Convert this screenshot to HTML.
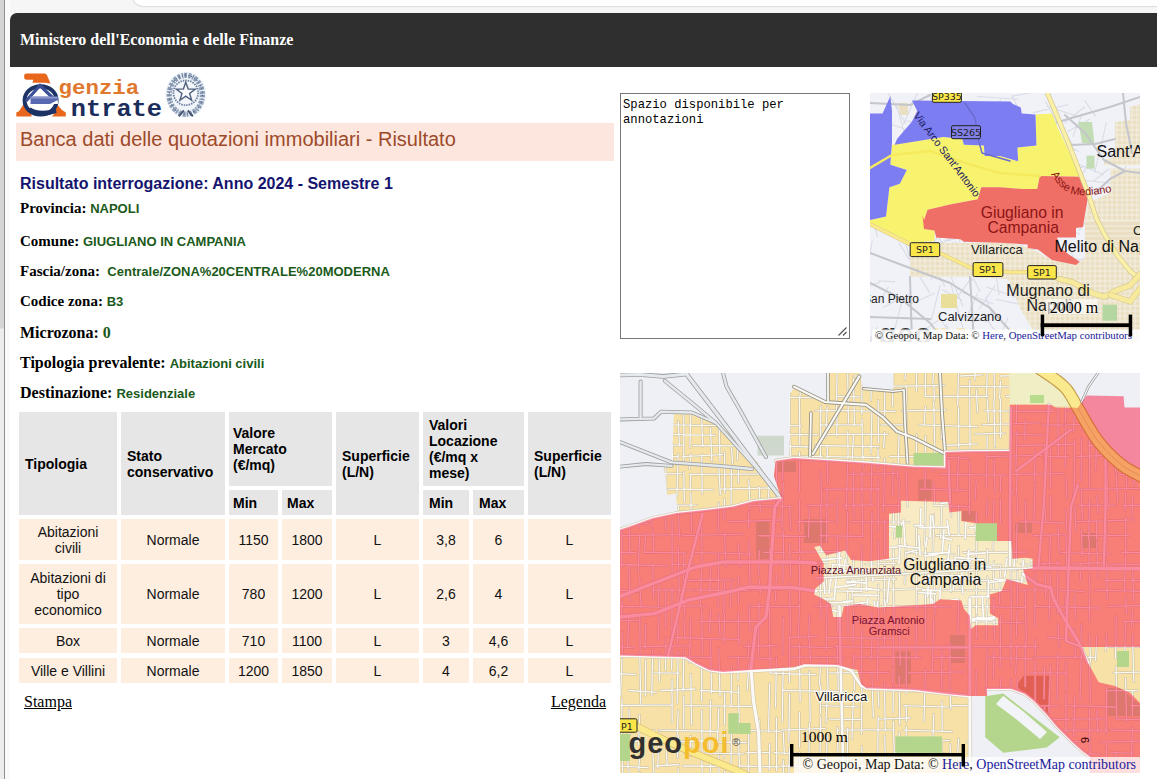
<!DOCTYPE html>
<html lang="it">
<head>
<meta charset="utf-8">
<title>Banca dati delle quotazioni immobiliari - Risultato</title>
<style>
html,body{margin:0;padding:0;}
body{width:1157px;height:779px;overflow:hidden;position:relative;background:#fff;font-family:"Liberation Serif",serif;}
.abs{position:absolute;}
#chrome-top{left:0;top:0;width:1157px;height:13px;background:#f6f6f6;}
#chrome-pill{left:133px;top:-14px;width:1100px;height:20px;background:#fff;border-radius:10px;box-shadow:0 0 1px 1px #dcdcdc;}
#left-strip{left:0;top:0;width:4px;height:779px;background:linear-gradient(#d4d4d4 0,#d4d4d4 328px,#ededed 329px,#ededed 100%);}
#left-line{left:4px;top:0;width:1px;height:779px;background:#8f8f8f;}
#left-white{left:5px;top:0;width:5px;height:779px;background:#fafafa;}
#hdr{left:10px;top:13px;width:1147px;height:54px;background:#2f2f2f;border-top-left-radius:7px;}
#hdr span{position:absolute;left:10px;top:18px;color:#fff;font:bold 16px/18px "Liberation Serif",serif;white-space:nowrap;}
#titleband{left:16px;top:123px;width:598px;height:38px;background:#fde6de;}
#titleband span{position:absolute;left:4px;top:4px;font:20px/24px "Liberation Sans",sans-serif;color:#9c4a2a;white-space:nowrap;}
#res{left:20px;top:175px;font:bold 16px/18px "Liberation Sans",sans-serif;color:#14146e;white-space:nowrap;}
.row{left:20px;font:bold 16px/18px "Liberation Serif",serif;color:#000;white-space:nowrap;}
.row.s{font-size:15px;}
.row b{font:bold 13px/18px "Liberation Sans",sans-serif;color:#1a5a1a;}
.row i{font-style:normal;color:#1a5a1a;}

#tbl{left:15px;top:408px;border-collapse:separate;border-spacing:4px;table-layout:fixed;font-family:"Liberation Sans",sans-serif;}
#tbl th{background:#e6e6e6;color:#000;font:bold 14px/16px "Liberation Sans",sans-serif;text-align:left;vertical-align:middle;padding:0 0 0 6px;}
#tbl td{background:#fdeee0;color:#111;font:14px/16px "Liberation Sans",sans-serif;text-align:center;vertical-align:middle;padding:0;}
#tbl tr.last td{border-top:1px solid #fff;}
.lnk{font:16px/18px "Liberation Serif",serif;color:#000;text-decoration:underline;}

#ta{left:620px;top:93px;width:230px;height:246px;box-sizing:border-box;border:1px solid #767676;background:#fff;font:12.2px/15px "Liberation Mono",monospace;color:#000;padding:4px 2px;white-space:pre;overflow:hidden;}
#bigmap{left:620px;top:373px;width:520px;height:400px;overflow:hidden;}
#smallmap{left:870px;top:93px;width:270px;height:249px;overflow:hidden;}
</style>
</head>
<body>
<div class="abs" id="chrome-top"></div>
<div class="abs" id="chrome-pill"></div>
<div class="abs" id="left-strip"></div>
<div class="abs" id="left-line"></div>
<div class="abs" id="left-white"></div>
<div class="abs" id="hdr"><span>Ministero dell'Economia e delle Finanze</span></div>

<div class="abs" id="titleband"><span>Banca dati delle quotazioni immobiliari - Risultato</span></div>
<div class="abs" id="res">Risultato interrogazione: Anno 2024 - Semestre 1</div>
<div class="abs row s" style="top:199px">Provincia: <b>NAPOLI</b></div>
<div class="abs row s" style="top:232px">Comune: <b>GIUGLIANO IN CAMPANIA</b></div>
<div class="abs row s" style="top:262px">Fascia/zona: <b>&nbsp;Centrale/ZONA%20CENTRALE%20MODERNA</b></div>
<div class="abs row s" style="top:292px">Codice zona: <b>B3</b></div>
<div class="abs row" style="top:324px">Microzona: <i>0</i></div>
<div class="abs row" style="top:354px">Tipologia prevalente: <b>Abitazioni civili</b></div>
<div class="abs row" style="top:384px">Destinazione: <b>Residenziale</b></div>

<table class="abs" id="tbl" cellspacing="0" cellpadding="0">
<colgroup><col style="width:98px"><col style="width:104px"><col style="width:49px"><col style="width:50px"><col style="width:83px"><col style="width:46px"><col style="width:51px"><col style="width:83px"></colgroup>
<tr style="height:74px"><th rowspan="2">Tipologia</th><th rowspan="2">Stato<br>conservativo</th><th colspan="2" style="padding-left:4px">Valore<br>Mercato<br>(&euro;/mq)</th><th rowspan="2">Superficie<br>(L/N)</th><th colspan="2">Valori<br>Locazione<br>(&euro;/mq x<br>mese)</th><th rowspan="2">Superficie<br>(L/N)</th></tr>
<tr style="height:25px"><th style="padding-left:4px">Min</th><th style="padding-left:5px">Max</th><th>Min</th><th>Max</th></tr>
<tr style="height:41px"><td>Abitazioni<br>civili</td><td>Normale</td><td>1150</td><td>1800</td><td>L</td><td>3,8</td><td>6</td><td>L</td></tr>
<tr style="height:60px"><td>Abitazioni di<br>tipo<br>economico</td><td>Normale</td><td>780</td><td>1200</td><td>L</td><td>2,6</td><td>4</td><td>L</td></tr>
<tr style="height:25px"><td>Box</td><td>Normale</td><td>710</td><td>1100</td><td>L</td><td>3</td><td>4,6</td><td>L</td></tr>
<tr class="last" style="height:26px"><td>Ville e Villini</td><td>Normale</td><td>1200</td><td>1850</td><td>L</td><td>4</td><td>6,2</td><td>L</td></tr>
</table>
<div class="abs lnk" style="left:24px;top:693px">Stampa</div>
<div class="abs lnk" style="right:551px;top:693px">Legenda</div>
<div class="abs" style="left:14px;top:68px"><svg width="200" height="54" viewBox="14 68 200 54" style="display:block">
<path d="M24.2 75.5 Q24.2 73.4 27 73.4 L44.5 73.4 Q46.3 73.4 47 75.2 L50.5 83.5 L45 82.8 L32.5 82.8 L33.2 79.8 L27 79.8 Q24.2 79.8 24.2 77.6 Z" fill="#e8671c"/>
<path d="M16.3 116.4 L16.3 112.6 L19 111.2 L24 103.5 L28.5 108 L31.5 112.5 L31.5 116.4 Z" fill="#e8671c"/>
<path d="M53.5 107.5 L57.5 105 L62 110 L65.8 112.6 L65.8 116.4 L52 116.4 L55.5 112 Z" fill="#e8671c"/>
<ellipse cx="40.6" cy="100.4" rx="16" ry="14.2" fill="#fff" stroke="#1d3365" stroke-width="4"/>
<path d="M26 101 L40 85.5 L55 100" fill="none" stroke="#3a4f96" stroke-width="3.2"/>
<rect x="30.5" y="96.6" width="27.3" height="7.4" fill="#5868b2"/>
<rect x="30.5" y="96.6" width="27.3" height="2" fill="#8a96c8"/>
<path d="M30.5 107.5 Q40 113.5 56 108.5 L56.5 113 Q40 119 27.5 111.5 Z" fill="#1d3365"/>
<path d="M57.8 100 L57.8 104 L50 104 Z" fill="#fff"/>
<text x="58.6" y="94.2" font-family="Liberation Mono, monospace" font-weight="bold" font-size="20" textLength="80.6" lengthAdjust="spacingAndGlyphs" fill="#e0782e">genzia</text>
<text x="70.8" y="116" font-family="Liberation Mono, monospace" font-weight="bold" font-size="24.5" textLength="91.2" lengthAdjust="spacingAndGlyphs" fill="#1b2d5a">ntrate</text>
<g style="filter:blur(.35px)">
<ellipse cx="185.8" cy="94.8" rx="20.5" ry="23.2" fill="#f0f5fa"/>
<ellipse cx="185.8" cy="94.8" rx="16.6" ry="19.4" fill="none" stroke="#8b9bb5" stroke-width="5.2" stroke-dasharray="2.6 1.3 1.6 .9 3 1.5"/>
<ellipse cx="185.8" cy="94.8" rx="16.6" ry="19.4" fill="none" stroke="#5a6a88" stroke-width="1.1" stroke-dasharray="1.4 2.3 .8 1.9"/>
<circle cx="185.8" cy="92.8" r="12.4" fill="#f2f6fa" stroke="#6e80a0" stroke-width="1.8" stroke-dasharray="1.5 1"/>
<polygon points="185.8,82.2 188.2,89.0 195.3,89.1 189.6,93.4 191.7,100.3 185.8,96.2 179.9,100.3 182.0,93.4 176.3,89.1 183.4,89.0" fill="#fafcfe" stroke="#50617f" stroke-width="1.4" stroke-linejoin="miter"/>
<path d="M178.8 116.3 L183.8 110.3 M192.8 116.3 L187.8 110.3" stroke="#48546e" stroke-width="1.8"/>
</g>
</svg></div>
<div class="abs" id="ta">Spazio disponibile per
annotazioni</div>
<svg class="abs" style="left:836px;top:325px" width="12" height="12" viewBox="0 0 12 12"><path d="M2.5 10.5 L10.5 2.5 M7 10.5 L10.5 7" stroke="#555" stroke-width="1.2" fill="none"/></svg>
<div class="abs" id="bigmap">
<svg width="520" height="400" viewBox="0 0 520 400" style="display:block">
<rect width="520" height="400" fill="#f7e1a6"/>
<rect x="298.3" y="106.3" width="13.3" height="21.3" fill="#bcd490"/>
<rect x="157.5" y="88.5" width="18.5" height="10.5" fill="#bcd490"/>
<rect x="136.2" y="148.8" width="13.3" height="37.2" fill="#bcd490"/>
<rect x="184" y="146.2" width="24.0" height="23.8" fill="#bcd490"/>
<rect x="275.4" y="278.3" width="15.6" height="32.7" fill="#bcd490"/>
<rect x="341.4" y="138" width="14.3" height="10.0" fill="#bcd490"/>
<rect x="461" y="160" width="15.0" height="15.0" fill="#bcd490"/>
<rect x="395" y="150" width="17.0" height="10.0" fill="#bcd490"/>
<rect x="330" y="262" width="15.0" height="28.0" fill="#bcd490"/>
<polygon points="396,313 403.7,302.7 429.4,302.7 429.4,343.7 414,328.3" fill="#c8a05a"/>
<polygon points="488,315 500,315 520,332 520,343 488,343" fill="#bcd490"/>
<polygon points="280.9,127.7 328.4,128.9 329.6,139.6 341.4,137.9 341.4,147.9 355.7,150.2 377.0,150.2 377.0,168.0 391.3,168.0 392.5,185.8 405.5,184.7 412.6,185.8 412.6,195.3 403.1,196.5 407.9,212.0 386.5,206.0 381.8,217.9 369.9,221.5 369.9,240.4 378.2,245.2 378.2,252.3 355.7,252.3 350.9,255.9 349.7,242.8 343.8,235.7 341.4,227.4 320.0,226.2 312.9,230.9 279.7,233.3 258.3,234.5 239.3,230.9 223.9,233.3 221.5,244.0 213.2,244.0 210.9,230.9 203.7,226.2 194.2,221.5 195.4,215.5 203.7,208.4 203.7,190.6 194.2,174.0 200.2,172.8 206.1,182.3 215.6,179.9 225.1,177.5 231.0,187.0 248.8,188.2 269.0,185.8 269.0,140.7 280.9,139.6" fill="#f8ebc4"/>
<path d="M2.0 -10.3L0.7 9.9M2.0 17.4L2.0 46.4M2.0 46.9L0.8 78.7M2.0 84.6L1.2 132.5M2.0 141.3L1.7 194.2M2.0 227.8L1.4 247.7M2.0 259.2L2.4 280.6M2.0 285.8L0.7 322.2M2.0 325.1L1.4 367.0M2.0 375.2L2.9 407.8M9.0 70.4L7.9 101.6M9.0 108.4L9.8 124.0M9.0 132.1L9.6 181.9M9.0 190.3L10.0 228.0M9.0 241.3L7.6 274.7M9.0 336.6L9.5 362.2M9.0 362.6L7.8 395.5M9.0 396.3L8.2 441.8M19.7 -17.6L20.8 14.8M19.7 26.3L19.4 75.7M19.7 133.1L18.9 154.3M19.7 161.1L18.2 199.3M19.7 205.1L21.1 234.3M19.7 244.0L20.2 279.1M19.7 279.8L20.8 330.7M19.7 341.9L18.5 372.0M19.7 380.9L18.8 397.4M19.7 399.7L18.2 427.6M25.8 14.6L25.3 34.6M25.8 72.7L24.6 105.8M25.8 107.2L26.8 135.3M25.8 159.9L24.4 179.9M25.8 251.1L24.8 275.8M25.8 286.6L25.3 322.5M32.7 -4.5L31.2 24.1M32.7 28.0L34.0 52.6M32.7 124.7L31.8 153.6M32.7 156.4L33.9 178.8M32.7 190.5L33.6 224.2M32.7 277.4L31.7 322.2M32.7 374.5L34.0 404.7M39.2 49.0L39.3 90.0M39.2 209.8L38.4 234.2M39.2 242.4L38.1 267.0M39.2 279.7L39.4 308.3M39.2 359.2L37.7 395.0M45.8 -19.9L45.7 26.9M45.8 37.0L45.8 73.9M45.8 81.6L46.0 127.8M45.8 131.3L45.8 156.6M45.8 215.8L45.8 255.0M45.8 264.7L45.7 297.2M45.8 366.2L47.1 390.9M52.1 -16.4L51.3 15.8M52.1 70.8L52.6 91.1M52.1 146.4L52.1 199.5M52.1 213.3L51.9 261.5M52.1 268.7L51.6 296.6M52.1 306.7L51.9 321.5M52.1 321.7L52.1 349.3M58.2 -12.0L57.5 3.6M58.2 48.2L59.5 72.8M58.2 80.8L56.9 123.5M58.2 133.1L59.5 164.6M58.2 173.4L59.3 220.3M58.2 221.2L57.7 270.6M58.2 278.4L57.1 330.4M58.2 337.7L57.2 361.5M58.2 362.2L57.6 384.5M58.2 395.1L57.3 421.0M63.8 -12.5L64.0 2.1M63.8 39.7L63.8 87.3M63.8 99.0L64.4 129.1M63.8 180.8L63.4 220.9M63.8 221.7L64.6 241.0M63.8 244.6L64.9 265.3M63.8 277.4L63.1 318.9M63.8 323.0L63.7 355.9M70.8 9.0L69.3 35.7M70.8 41.0L69.9 74.5M70.8 81.5L69.6 95.7M70.8 101.3L70.2 117.0M70.8 120.3L71.6 158.3M70.8 245.8L69.4 289.5M70.8 301.2L71.5 351.7M70.8 363.1L70.8 382.8M81.7 0.5L80.3 42.9M81.7 44.8L82.7 73.6M81.7 81.4L82.2 121.1M81.7 152.6L82.1 187.2M81.7 188.1L80.4 232.3M81.7 236.1L82.4 280.0M81.7 293.6L81.6 327.9M81.7 337.4L82.1 382.9M81.7 384.0L82.4 404.0M90.6 -19.6L91.1 -3.1M90.6 6.6L90.6 48.3M90.6 54.8L91.8 87.9M90.6 191.4L89.7 223.8M90.6 237.1L89.5 259.7M90.6 267.0L91.5 320.1M90.6 327.2L89.8 377.6M90.6 390.1L89.1 424.1M98.8 -10.9L98.2 8.8M98.8 20.6L99.8 34.7M98.8 36.3L100.0 88.3M98.8 92.4L100.3 121.6M98.8 129.9L98.1 158.7M98.8 181.5L98.1 233.9M98.8 241.0L100.1 262.8M98.8 275.2L100.0 322.5M98.8 335.7L97.4 372.2M98.8 382.4L99.2 414.9M104.6 7.8L104.1 27.0M104.6 79.1L104.7 120.0M104.6 125.6L103.7 146.4M104.6 159.1L105.8 193.5M104.6 207.4L103.6 239.9M104.6 241.1L103.8 269.2M104.6 320.6L104.6 351.6M104.6 356.8L103.9 384.7M104.6 398.2L105.0 417.4M111.4 -11.9L111.2 12.3M111.4 74.8L112.6 90.1M111.4 96.7L111.0 134.8M111.4 209.2L110.3 233.4M111.4 292.8L111.2 333.3M111.4 359.9L110.8 411.7M118.4 -0.9L117.1 41.7M118.4 49.1L117.5 87.0M118.4 95.4L118.3 109.8M118.4 170.3L119.8 193.9M118.4 203.8L118.4 230.4M118.4 239.9L118.9 271.1M118.4 284.0L117.9 307.3M118.4 313.2L119.3 355.2M118.4 365.6L119.8 400.3M128.8 -13.1L128.2 10.0M128.8 23.3L128.0 57.7M128.8 106.8L130.2 137.0M128.8 138.9L128.5 155.1M128.8 167.6L130.3 217.9M128.8 230.9L130.1 258.4M128.8 268.9L128.4 284.2M128.8 289.4L127.3 317.0M128.8 351.1L128.4 404.6M139.2 -7.0L138.8 9.0M139.2 21.9L140.4 43.8M139.2 85.8L137.9 101.4M139.2 114.3L140.4 138.9M139.2 177.4L138.7 202.2M139.2 206.0L140.5 220.2M139.2 229.1L138.4 281.7M139.2 347.0L139.2 371.3M149.7 3.2L149.1 42.1M149.7 47.1L148.8 93.2M149.7 103.8L148.3 127.9M149.7 175.4L148.4 229.9M149.7 231.2L149.5 265.6M149.7 268.9L150.2 300.0M149.7 310.5L148.5 359.2M149.7 371.0L149.3 397.0M156.4 -12.6L157.5 11.5M156.4 19.6L157.8 47.0M156.4 86.7L156.3 141.3M156.4 201.8L155.4 227.9M156.4 284.6L155.6 334.1M156.4 345.0L156.6 397.8M163.2 -8.9L162.4 10.9M163.2 19.2L161.7 60.0M163.2 64.5L162.6 106.4M163.2 109.2L161.9 155.8M163.2 157.2L163.6 187.4M163.2 188.7L162.9 209.4M163.2 244.4L162.9 281.6M163.2 293.7L162.3 348.6M163.2 358.8L164.4 381.1M163.2 387.0L164.3 434.7M169.6 -19.6L170.9 17.1M169.6 18.3L169.7 57.8M169.6 59.9L170.9 85.5M169.6 134.6L171.0 156.7M169.6 170.4L170.9 204.2M169.6 209.6L170.6 260.7M169.6 262.9L169.4 309.1M169.6 321.0L168.8 369.0M169.6 374.6L168.5 409.8M179.5 6.9L180.3 22.6M179.5 23.1L179.8 71.5M179.5 79.2L179.3 118.9M179.5 127.1L179.3 158.5M179.5 164.7L179.5 179.6M179.5 182.9L179.4 228.2M179.5 230.7L178.4 264.1M179.5 270.2L179.5 287.9M179.5 288.5L180.2 328.6M179.5 339.5L179.5 374.4M179.5 379.7L180.6 432.7M189.4 136.1L188.4 164.4M189.4 241.8L188.8 266.6M189.4 267.1L190.7 288.5M189.4 298.1L190.2 348.8M189.4 350.4L189.0 386.1M189.4 398.4L190.5 435.1M200.8 32.8L200.4 87.4M200.8 98.1L201.6 130.2M200.8 130.9L201.3 178.5M200.8 192.3L200.3 230.3M200.8 230.3L201.2 245.7M200.8 288.6L199.4 311.9M200.8 312.0L200.4 340.5M200.8 343.7L200.0 381.6M200.8 390.3L202.2 423.8M207.2 34.0L205.8 64.5M207.2 73.5L207.7 110.6M207.2 116.8L206.5 169.2M207.2 181.8L207.0 197.6M207.2 201.0L205.8 217.4M207.2 225.1L206.3 277.7M207.2 286.2L208.2 321.0M207.2 323.4L205.9 350.1M207.2 362.5L205.8 408.6M217.2 -6.0L216.4 38.4M217.2 39.8L216.7 63.4M217.2 126.3L217.0 151.2M217.2 162.3L217.6 197.7M217.2 234.3L217.9 259.0M217.2 272.2L218.3 316.8M217.2 354.1L218.6 396.5M227.7 0.9L228.4 50.1M227.7 58.1L228.1 84.7M227.7 85.8L226.3 137.1M227.7 138.6L226.7 190.7M227.7 191.1L228.1 206.8M227.7 216.6L228.0 260.8M227.7 355.4L226.9 408.1M233.5 5.4L234.4 52.7M233.5 61.6L232.2 87.3M233.5 98.0L233.2 120.4M233.5 120.6L234.1 145.2M233.5 184.5L232.0 233.4M233.5 239.2L233.0 271.1M233.5 281.0L234.5 317.0M233.5 318.3L232.0 365.9M241.9 -5.3L241.9 41.4M241.9 46.3L243.2 94.4M241.9 98.4L241.9 121.2M241.9 122.7L242.8 162.8M241.9 172.6L241.5 218.8M241.9 255.8L241.0 306.2M241.9 309.9L241.5 360.9M241.9 373.3L242.0 396.8M251.9 -0.6L250.9 27.7M251.9 39.5L250.9 80.6M251.9 86.8L250.8 132.5M251.9 138.9L251.0 189.2M251.9 238.5L251.4 258.8M251.9 266.2L251.0 286.8M251.9 300.4L253.3 344.3M251.9 386.6L251.0 430.7M258.1 -13.8L257.8 16.1M258.1 27.2L258.5 69.6M258.1 76.1L257.8 95.9M258.1 106.3L258.3 157.5M258.1 168.0L258.7 199.3M258.1 211.6L259.1 257.3M258.1 266.8L257.5 307.2M258.1 315.9L258.9 334.0M258.1 343.9L257.8 383.8M258.1 390.1L258.6 429.6M264.7 -0.4L264.6 45.5M264.7 59.2L263.6 74.7M264.7 85.7L263.5 138.3M264.7 146.3L264.7 182.5M264.7 191.4L264.4 239.4M264.7 252.7L264.3 275.3M264.7 310.0L264.4 326.3M264.7 326.5L265.3 357.6M264.7 362.6L265.4 387.5M273.3 -13.4L272.5 33.4M273.3 90.0L272.5 123.2M273.3 136.7L274.3 165.2M273.3 176.6L273.5 209.8M273.3 211.5L274.4 259.7M273.3 263.5L273.1 292.9M273.3 295.5L272.7 309.6M273.3 313.0L273.1 339.4M273.3 348.3L274.6 389.4M279.2 57.9L277.7 106.0M279.2 106.2L278.4 159.2M279.2 160.6L280.0 180.5M279.2 246.1L280.3 292.1M279.2 303.1L279.7 351.5M279.2 359.0L280.3 403.4M286.2 -13.0L284.9 6.7M286.2 13.3L286.2 33.2M286.2 40.8L287.3 90.1M286.2 96.7L287.3 133.7M286.2 171.2L284.8 211.3M286.2 266.5L286.2 320.7M286.2 333.3L286.6 348.7M286.2 353.4L286.2 402.8M296.4 -13.7L296.5 18.2M296.4 61.4L296.4 96.1M296.4 155.2L296.6 182.2M296.4 191.1L297.0 237.2M296.4 249.6L295.8 286.0M296.4 370.1L296.8 409.2M305.4 0.4L305.3 23.1M305.4 33.8L304.1 52.0M305.4 62.8L305.1 114.3M305.4 125.8L304.7 172.1M305.4 176.3L305.2 207.6M305.4 216.6L305.7 268.9M305.4 296.3L304.0 348.0M313.8 -7.6L312.9 10.6M313.8 12.7L314.4 27.3M313.8 29.0L314.9 82.6M313.8 84.4L313.0 99.2M313.8 109.4L314.6 131.1M313.8 141.1L312.6 190.2M313.8 199.0L315.1 242.1M313.8 245.6L312.3 299.2M313.8 341.2L312.8 367.9M313.8 380.0L313.4 413.9M321.9 25.3L321.7 65.8M321.9 128.4L320.6 165.6M321.9 277.2L321.7 315.9M321.9 328.3L322.2 357.8M321.9 370.3L320.4 417.4M330.0 106.0L331.0 143.4M330.0 201.6L330.9 219.1M330.0 270.0L329.9 308.8M330.0 311.7L330.8 336.2M330.0 371.0L331.2 394.6M338.6 -5.7L337.7 32.5M338.6 35.0L338.8 77.7M338.6 83.4L337.2 118.6M338.6 132.5L339.0 161.9M338.6 172.9L338.1 193.3M338.6 200.6L340.1 215.4M338.6 227.5L337.9 261.5M338.6 365.7L337.6 381.3M338.6 382.4L339.7 398.5M349.8 7.3L349.5 23.9M349.8 25.6L350.0 78.9M349.8 87.9L349.5 141.1M349.8 181.8L349.1 204.9M349.8 339.7L351.1 359.7M349.8 369.2L350.6 395.4M349.8 396.9L348.7 424.2M356.3 -12.8L354.8 7.0M356.3 17.1L357.6 39.1M356.3 106.9L355.1 126.6M356.3 139.6L356.2 188.2M356.3 192.9L356.7 240.7M356.3 242.7L356.9 265.7M356.3 297.2L355.6 328.0M356.3 339.8L356.3 367.5M356.3 372.0L357.7 423.0M367.2 0.0L366.5 22.7M367.2 26.3L368.6 48.6M367.2 62.6L366.5 114.5M367.2 127.0L366.5 143.4M367.2 176.5L368.2 196.3M367.2 203.6L368.4 225.3M367.2 228.3L366.2 265.7M367.2 276.5L365.9 319.7M367.2 320.9L366.5 359.9M367.2 362.8L368.1 401.9M373.9 -18.0L374.5 26.0M373.9 26.8L374.9 74.0M373.9 86.1L375.1 120.3M373.9 127.0L372.9 176.8M373.9 188.4L373.5 217.5M373.9 225.8L373.7 240.0M373.9 247.2L374.8 266.1M373.9 278.3L373.5 305.4M373.9 345.8L374.0 380.1M380.5 7.8L379.6 25.7M380.5 26.0L380.5 64.5M380.5 102.6L380.5 118.5M380.5 125.5L380.2 151.0M380.5 193.2L379.5 230.7M380.5 242.3L380.2 294.7M380.5 306.5L381.8 342.0M380.5 352.9L380.0 380.8M390.9 5.4L392.2 21.6M390.9 34.7L391.3 58.9M390.9 64.0L390.7 99.8M390.9 106.9L392.3 121.7M390.9 132.6L391.8 185.0M390.9 197.4L391.3 247.6M390.9 251.4L391.0 293.2M390.9 306.1L390.9 345.6M390.9 351.7L390.3 404.7M397.1 -2.2L396.4 51.0M397.1 57.6L396.0 93.4M397.1 95.3L396.5 121.3M397.1 124.7L398.1 142.3M397.1 150.9L396.2 188.2M397.1 198.2L397.4 231.1M397.1 237.7L396.2 264.4M397.1 271.6L395.6 301.3M397.1 306.2L397.3 355.5M397.1 392.2L395.8 437.9M405.2 -18.1L405.9 11.8M405.2 46.9L404.8 67.2M405.2 127.4L406.0 162.6M405.2 216.7L406.3 268.2M405.2 268.3L405.2 313.6M405.2 327.1L406.1 364.6M405.2 376.8L405.1 415.7M415.1 -11.2L414.7 18.8M415.1 76.6L414.5 108.8M415.1 110.8L413.8 148.4M415.1 200.3L414.8 253.6M415.1 266.4L415.3 280.8M415.1 287.8L415.2 339.5M415.1 353.5L415.6 388.7M415.1 394.1L414.6 422.8M424.6 -4.2L424.3 13.8M424.6 72.7L425.0 106.7M424.6 120.6L425.6 148.7M424.6 189.7L425.8 224.7M424.6 294.4L424.0 325.7M424.6 332.9L423.7 367.6M424.6 376.4L426.1 415.1M430.4 -7.7L430.9 38.6M430.4 73.4L430.4 114.8M430.4 122.5L430.5 147.4M430.4 161.4L429.2 198.9M430.4 201.1L429.2 246.3M430.4 292.7L428.9 339.7M430.4 350.5L429.9 377.8M430.4 380.1L431.6 405.1M438.0 -6.5L439.1 23.3M438.0 31.5L438.3 84.8M438.0 154.4L439.3 180.8M438.0 187.8L437.6 240.7M438.0 250.8L439.1 273.9M438.0 280.6L437.0 327.1M438.0 357.9L438.1 394.9M445.9 5.9L445.2 30.0M445.9 33.3L445.4 48.7M445.9 50.9L445.2 93.9M445.9 105.5L446.9 124.8M445.9 136.1L446.6 156.6M445.9 161.9L447.2 215.2M445.9 222.2L444.8 245.5M445.9 288.3L446.2 317.4M445.9 320.4L445.9 370.2M445.9 377.8L445.5 402.9M454.8 -10.7L453.8 19.3M454.8 31.2L453.6 58.4M454.8 66.3L454.2 95.1M454.8 96.0L453.7 122.8M454.8 132.8L456.0 158.4M454.8 221.3L455.3 246.6M454.8 255.9L455.3 284.3M454.8 323.2L453.6 363.0M454.8 375.8L453.4 419.9M461.3 -14.1L459.9 12.4M461.3 16.7L462.3 56.9M461.3 64.9L461.1 108.3M461.3 117.8L462.3 146.1M461.3 157.0L462.3 182.8M461.3 191.3L460.1 207.2M461.3 251.4L460.9 268.9M461.3 279.4L460.0 327.4M469.5 -18.4L469.5 24.3M469.5 37.3L468.1 56.5M469.5 66.3L469.6 113.4M469.5 126.9L468.7 167.1M469.5 167.9L468.6 196.6M469.5 200.9L470.0 220.5M469.5 223.8L469.3 247.8M469.5 260.9L470.6 289.3M469.5 291.3L470.4 328.3M469.5 336.0L470.0 381.2M469.5 389.6L470.5 422.5M476.7 -9.2L476.1 13.3M476.7 16.0L475.6 58.8M476.7 63.3L475.7 96.6M476.7 122.5L478.2 140.0M476.7 147.9L476.5 166.3M476.7 169.0L478.0 205.2M476.7 263.1L475.6 287.4M476.7 337.7L477.8 359.3M486.7 15.8L486.3 45.0M486.7 56.6L486.9 80.4M486.7 89.2L487.9 136.8M486.7 150.0L485.6 184.3M486.7 188.5L487.2 226.3M486.7 262.1L485.7 277.7M486.7 313.9L486.0 360.2M486.7 369.4L486.2 404.5M496.2 4.8L495.6 55.8M496.2 62.1L495.3 99.1M496.2 100.3L497.6 127.6M496.2 243.5L495.6 285.3M496.2 293.3L496.6 346.3M496.2 379.0L496.0 400.7M505.6 -8.8L505.7 29.0M505.6 36.9L504.7 67.1M505.6 79.6L506.7 116.1M505.6 119.6L504.9 137.5M505.6 144.4L505.9 181.1M505.6 182.7L504.4 217.7M505.6 223.4L506.7 240.4M505.6 248.1L504.5 291.4M505.6 305.3L506.6 348.9M505.6 383.3L506.5 429.0M512.6 -8.8L511.7 5.8M512.6 10.0L513.7 53.0M512.6 61.7L513.8 111.4M512.6 123.6L512.1 144.5M512.6 198.8L513.9 228.1M512.6 238.2L511.4 254.0M512.6 261.7L513.8 308.6M512.6 318.1L512.4 342.5M512.6 354.3L511.1 392.1M512.6 393.6L512.7 440.5M100.5 3.0L119.2 1.6M234.5 3.0L272.9 1.6M340.4 3.0L362.4 1.9M380.3 3.0L428.9 1.7M436.1 3.0L478.5 2.6M485.5 3.0L503.8 2.3M0.1 13.3L32.3 13.3M37.5 13.3L85.1 15.1M105.0 13.3L124.8 14.4M142.2 13.3L200.5 13.9M257.8 13.3L324.6 12.5M339.9 13.3L396.4 13.9M403.4 13.3L450.0 11.6M501.2 13.3L538.3 12.3M-19.8 23.5L43.5 23.3M54.9 23.5L88.6 21.8M139.7 23.5L206.5 25.2M218.1 23.5L240.3 23.9M305.2 23.5L368.3 23.5M386.3 23.5L418.6 21.6M458.2 23.5L497.0 23.9M514.3 23.5L566.0 24.5M49.3 37.9L74.4 38.1M195.4 37.9L234.5 37.3M235.6 37.9L275.2 38.4M281.9 37.9L325.6 37.0M364.8 37.9L434.2 38.4M448.7 37.9L483.8 36.6M486.6 37.9L544.5 39.2M-2.3 51.8L44.5 52.2M51.1 51.8L107.7 52.6M122.9 51.8L181.3 52.9M200.8 51.8L242.4 51.9M261.2 51.8L286.1 51.7M299.2 51.8L357.4 53.7M362.0 51.8L419.3 49.9M422.0 51.8L443.2 52.0M446.8 51.8L513.7 50.4M43.9 61.1L95.0 62.3M141.2 61.1L197.3 61.6M205.4 61.1L268.3 61.3M354.9 61.1L384.5 60.1M393.2 61.1L423.2 62.1M473.9 61.1L521.5 62.5M2.5 72.5L63.3 71.8M73.0 72.5L137.4 73.2M149.3 72.5L190.9 74.0M195.1 72.5L259.0 73.6M323.7 72.5L357.1 70.9M398.1 72.5L454.4 71.1M468.1 72.5L490.8 74.1M3.8 83.6L57.6 83.6M62.2 83.6L102.6 81.6M159.3 83.6L202.7 83.3M206.2 83.6L259.9 84.5M269.9 83.6L293.7 83.6M312.1 83.6L348.3 85.4M365.9 83.6L422.0 82.3M427.3 83.6L448.9 83.6M457.0 83.6L504.0 81.6M517.7 83.6L569.7 83.8M6.2 101.4L61.5 100.7M69.9 101.4L138.5 101.0M227.0 101.4L276.7 100.4M320.4 101.4L385.7 102.2M392.2 101.4L443.8 100.7M498.3 101.4L542.8 103.4M47.9 116.1L93.2 116.8M99.7 116.1L150.4 115.0M203.9 116.1L259.4 116.0M299.8 116.1L345.0 117.3M455.2 116.1L518.3 115.6M-16.3 132.4L9.7 130.8M16.8 132.4L76.6 132.2M130.8 132.4L172.2 133.6M187.4 132.4L213.2 131.9M223.6 132.4L253.9 131.8M261.5 132.4L280.5 132.7M314.4 132.4L349.2 133.8M458.5 132.4L495.9 132.2M503.2 132.4L558.3 132.1M-9.4 148.7L28.6 150.4M108.4 148.7L161.0 147.0M176.1 148.7L213.9 148.7M231.9 148.7L289.3 149.1M400.3 148.7L443.8 150.0M457.2 148.7L513.7 146.9M3.1 162.7L61.1 161.6M62.7 162.7L123.2 161.1M138.2 162.7L185.6 163.4M199.8 162.7L242.9 163.5M316.0 162.7L379.3 162.1M413.5 162.7L445.1 161.7M462.3 162.7L509.2 162.4M-12.3 179.4L16.2 179.6M23.7 179.4L65.8 179.8M73.1 179.4L132.8 181.1M143.9 179.4L164.6 179.6M172.8 179.4L220.2 178.5M285.3 179.4L334.1 181.2M343.0 179.4L406.6 179.2M441.4 179.4L490.4 181.1M501.6 179.4L561.3 180.1M-13.7 191.1L47.9 192.8M52.1 191.1L75.3 192.2M94.3 191.1L133.9 190.1M152.0 191.1L205.7 189.3M245.6 191.1L275.7 190.4M319.4 191.1L381.2 192.3M400.8 191.1L439.1 190.6M452.0 191.1L481.6 189.5M490.9 191.1L546.7 191.8M68.5 207.5L113.8 206.9M229.7 207.5L275.8 206.1M350.2 207.5L416.3 207.9M484.7 207.5L505.3 207.3M510.2 207.5L566.8 208.7M-3.2 217.2L19.8 218.3M31.7 217.2L73.7 217.2M75.6 217.2L127.2 217.5M134.3 217.2L171.8 215.8M175.2 217.2L242.1 218.5M259.6 217.2L302.6 215.5M320.2 217.2L344.2 217.3M346.6 217.2L388.9 217.3M399.1 217.2L436.1 216.8M440.2 217.2L464.8 218.6M474.8 217.2L539.2 218.9M-2.9 233.3L50.9 234.3M54.0 233.3L85.7 232.9M131.0 233.3L179.1 233.7M194.7 233.3L249.7 232.3M261.7 233.3L330.8 233.8M344.6 233.3L405.0 234.5M414.2 233.3L480.1 235.0M488.4 233.3L527.5 232.3M-15.5 248.4L20.4 247.2M80.0 248.4L139.2 248.4M232.7 248.4L261.0 249.8M346.5 248.4L403.2 249.7M503.7 248.4L563.4 248.1M50.3 264.5L117.5 266.3M169.0 264.5L197.3 263.4M207.1 264.5L272.4 265.3M427.7 264.5L450.2 265.8M-5.3 273.5L13.5 274.7M21.9 273.5L71.3 272.8M124.4 273.5L157.6 272.6M171.6 273.5L212.6 274.7M215.0 273.5L268.5 274.8M353.4 273.5L417.9 273.5M485.2 273.5L546.4 273.6M55.0 284.1L91.3 284.3M108.6 284.1L153.3 285.8M171.2 284.1L223.8 284.6M232.7 284.1L300.5 284.7M313.1 284.1L350.7 284.8M368.8 284.1L412.7 286.0M413.9 284.1L475.3 284.3M-18.9 299.8L16.0 301.6M33.8 299.8L59.3 300.1M149.9 299.8L196.2 301.7M209.2 299.8L269.0 299.3M288.3 299.8L343.2 298.9M410.2 299.8L446.3 299.9M493.7 299.8L527.9 299.0M8.9 317.5L36.6 319.3M40.5 317.5L75.2 316.0M80.4 317.5L118.9 319.4M161.9 317.5L223.4 318.6M265.0 317.5L312.1 318.5M365.0 317.5L398.0 316.6M486.6 317.5L517.3 317.7M-7.6 332.6L52.4 331.9M65.3 332.6L133.6 333.4M202.4 332.6L238.2 333.8M283.5 332.6L328.6 334.2M331.3 332.6L366.9 332.3M376.9 332.6L439.2 332.9M447.3 332.6L495.1 334.0M510.9 332.6L572.5 333.3M209.3 346.1L241.6 346.5M258.1 346.1L290.3 345.0M361.4 346.1L398.1 344.4M414.9 346.1L449.8 346.6M452.6 346.1L484.9 345.9M496.0 346.1L555.9 347.4M-1.1 357.1L34.6 357.4M38.9 357.1L98.2 358.5M114.4 357.1L160.3 358.3M160.9 357.1L205.1 355.4M217.7 357.1L273.4 356.7M283.6 357.1L332.2 358.6M418.6 357.1L487.8 357.1M490.5 357.1L532.1 358.0M-14.3 369.2L24.6 368.0M39.4 369.2L84.2 368.0M98.3 369.2L126.5 369.5M308.3 369.2L329.6 367.3M346.9 369.2L402.4 368.3M409.5 369.2L436.0 371.2M442.1 369.2L462.4 368.6M480.4 369.2L540.3 367.6M64.1 379.6L123.4 380.9M126.0 379.6L149.6 379.6M153.8 379.6L184.9 381.2M275.0 379.6L331.1 380.9M347.9 379.6L372.9 378.5M384.6 379.6L422.3 380.9M438.0 379.6L480.1 381.2M490.8 379.6L512.5 380.1M-0.8 393.0L27.9 394.6M35.5 393.0L58.9 391.5M62.9 393.0L104.7 393.5M118.8 393.0L159.7 393.9M160.7 393.0L203.2 393.7M217.5 393.0L248.0 393.7M294.8 393.0L316.0 394.9M466.1 393.0L486.1 391.9M504.7 393.0L534.1 394.7" fill="none" stroke="#c4b99c" stroke-width="2.3" stroke-linecap="round"/>
<path d="M2.0 -10.3L0.7 9.9M2.0 17.4L2.0 46.4M2.0 46.9L0.8 78.7M2.0 84.6L1.2 132.5M2.0 141.3L1.7 194.2M2.0 227.8L1.4 247.7M2.0 259.2L2.4 280.6M2.0 285.8L0.7 322.2M2.0 325.1L1.4 367.0M2.0 375.2L2.9 407.8M9.0 70.4L7.9 101.6M9.0 108.4L9.8 124.0M9.0 132.1L9.6 181.9M9.0 190.3L10.0 228.0M9.0 241.3L7.6 274.7M9.0 336.6L9.5 362.2M9.0 362.6L7.8 395.5M9.0 396.3L8.2 441.8M19.7 -17.6L20.8 14.8M19.7 26.3L19.4 75.7M19.7 133.1L18.9 154.3M19.7 161.1L18.2 199.3M19.7 205.1L21.1 234.3M19.7 244.0L20.2 279.1M19.7 279.8L20.8 330.7M19.7 341.9L18.5 372.0M19.7 380.9L18.8 397.4M19.7 399.7L18.2 427.6M25.8 14.6L25.3 34.6M25.8 72.7L24.6 105.8M25.8 107.2L26.8 135.3M25.8 159.9L24.4 179.9M25.8 251.1L24.8 275.8M25.8 286.6L25.3 322.5M32.7 -4.5L31.2 24.1M32.7 28.0L34.0 52.6M32.7 124.7L31.8 153.6M32.7 156.4L33.9 178.8M32.7 190.5L33.6 224.2M32.7 277.4L31.7 322.2M32.7 374.5L34.0 404.7M39.2 49.0L39.3 90.0M39.2 209.8L38.4 234.2M39.2 242.4L38.1 267.0M39.2 279.7L39.4 308.3M39.2 359.2L37.7 395.0M45.8 -19.9L45.7 26.9M45.8 37.0L45.8 73.9M45.8 81.6L46.0 127.8M45.8 131.3L45.8 156.6M45.8 215.8L45.8 255.0M45.8 264.7L45.7 297.2M45.8 366.2L47.1 390.9M52.1 -16.4L51.3 15.8M52.1 70.8L52.6 91.1M52.1 146.4L52.1 199.5M52.1 213.3L51.9 261.5M52.1 268.7L51.6 296.6M52.1 306.7L51.9 321.5M52.1 321.7L52.1 349.3M58.2 -12.0L57.5 3.6M58.2 48.2L59.5 72.8M58.2 80.8L56.9 123.5M58.2 133.1L59.5 164.6M58.2 173.4L59.3 220.3M58.2 221.2L57.7 270.6M58.2 278.4L57.1 330.4M58.2 337.7L57.2 361.5M58.2 362.2L57.6 384.5M58.2 395.1L57.3 421.0M63.8 -12.5L64.0 2.1M63.8 39.7L63.8 87.3M63.8 99.0L64.4 129.1M63.8 180.8L63.4 220.9M63.8 221.7L64.6 241.0M63.8 244.6L64.9 265.3M63.8 277.4L63.1 318.9M63.8 323.0L63.7 355.9M70.8 9.0L69.3 35.7M70.8 41.0L69.9 74.5M70.8 81.5L69.6 95.7M70.8 101.3L70.2 117.0M70.8 120.3L71.6 158.3M70.8 245.8L69.4 289.5M70.8 301.2L71.5 351.7M70.8 363.1L70.8 382.8M81.7 0.5L80.3 42.9M81.7 44.8L82.7 73.6M81.7 81.4L82.2 121.1M81.7 152.6L82.1 187.2M81.7 188.1L80.4 232.3M81.7 236.1L82.4 280.0M81.7 293.6L81.6 327.9M81.7 337.4L82.1 382.9M81.7 384.0L82.4 404.0M90.6 -19.6L91.1 -3.1M90.6 6.6L90.6 48.3M90.6 54.8L91.8 87.9M90.6 191.4L89.7 223.8M90.6 237.1L89.5 259.7M90.6 267.0L91.5 320.1M90.6 327.2L89.8 377.6M90.6 390.1L89.1 424.1M98.8 -10.9L98.2 8.8M98.8 20.6L99.8 34.7M98.8 36.3L100.0 88.3M98.8 92.4L100.3 121.6M98.8 129.9L98.1 158.7M98.8 181.5L98.1 233.9M98.8 241.0L100.1 262.8M98.8 275.2L100.0 322.5M98.8 335.7L97.4 372.2M98.8 382.4L99.2 414.9M104.6 7.8L104.1 27.0M104.6 79.1L104.7 120.0M104.6 125.6L103.7 146.4M104.6 159.1L105.8 193.5M104.6 207.4L103.6 239.9M104.6 241.1L103.8 269.2M104.6 320.6L104.6 351.6M104.6 356.8L103.9 384.7M104.6 398.2L105.0 417.4M111.4 -11.9L111.2 12.3M111.4 74.8L112.6 90.1M111.4 96.7L111.0 134.8M111.4 209.2L110.3 233.4M111.4 292.8L111.2 333.3M111.4 359.9L110.8 411.7M118.4 -0.9L117.1 41.7M118.4 49.1L117.5 87.0M118.4 95.4L118.3 109.8M118.4 170.3L119.8 193.9M118.4 203.8L118.4 230.4M118.4 239.9L118.9 271.1M118.4 284.0L117.9 307.3M118.4 313.2L119.3 355.2M118.4 365.6L119.8 400.3M128.8 -13.1L128.2 10.0M128.8 23.3L128.0 57.7M128.8 106.8L130.2 137.0M128.8 138.9L128.5 155.1M128.8 167.6L130.3 217.9M128.8 230.9L130.1 258.4M128.8 268.9L128.4 284.2M128.8 289.4L127.3 317.0M128.8 351.1L128.4 404.6M139.2 -7.0L138.8 9.0M139.2 21.9L140.4 43.8M139.2 85.8L137.9 101.4M139.2 114.3L140.4 138.9M139.2 177.4L138.7 202.2M139.2 206.0L140.5 220.2M139.2 229.1L138.4 281.7M139.2 347.0L139.2 371.3M149.7 3.2L149.1 42.1M149.7 47.1L148.8 93.2M149.7 103.8L148.3 127.9M149.7 175.4L148.4 229.9M149.7 231.2L149.5 265.6M149.7 268.9L150.2 300.0M149.7 310.5L148.5 359.2M149.7 371.0L149.3 397.0M156.4 -12.6L157.5 11.5M156.4 19.6L157.8 47.0M156.4 86.7L156.3 141.3M156.4 201.8L155.4 227.9M156.4 284.6L155.6 334.1M156.4 345.0L156.6 397.8M163.2 -8.9L162.4 10.9M163.2 19.2L161.7 60.0M163.2 64.5L162.6 106.4M163.2 109.2L161.9 155.8M163.2 157.2L163.6 187.4M163.2 188.7L162.9 209.4M163.2 244.4L162.9 281.6M163.2 293.7L162.3 348.6M163.2 358.8L164.4 381.1M163.2 387.0L164.3 434.7M169.6 -19.6L170.9 17.1M169.6 18.3L169.7 57.8M169.6 59.9L170.9 85.5M169.6 134.6L171.0 156.7M169.6 170.4L170.9 204.2M169.6 209.6L170.6 260.7M169.6 262.9L169.4 309.1M169.6 321.0L168.8 369.0M169.6 374.6L168.5 409.8M179.5 6.9L180.3 22.6M179.5 23.1L179.8 71.5M179.5 79.2L179.3 118.9M179.5 127.1L179.3 158.5M179.5 164.7L179.5 179.6M179.5 182.9L179.4 228.2M179.5 230.7L178.4 264.1M179.5 270.2L179.5 287.9M179.5 288.5L180.2 328.6M179.5 339.5L179.5 374.4M179.5 379.7L180.6 432.7M189.4 136.1L188.4 164.4M189.4 241.8L188.8 266.6M189.4 267.1L190.7 288.5M189.4 298.1L190.2 348.8M189.4 350.4L189.0 386.1M189.4 398.4L190.5 435.1M200.8 32.8L200.4 87.4M200.8 98.1L201.6 130.2M200.8 130.9L201.3 178.5M200.8 192.3L200.3 230.3M200.8 230.3L201.2 245.7M200.8 288.6L199.4 311.9M200.8 312.0L200.4 340.5M200.8 343.7L200.0 381.6M200.8 390.3L202.2 423.8M207.2 34.0L205.8 64.5M207.2 73.5L207.7 110.6M207.2 116.8L206.5 169.2M207.2 181.8L207.0 197.6M207.2 201.0L205.8 217.4M207.2 225.1L206.3 277.7M207.2 286.2L208.2 321.0M207.2 323.4L205.9 350.1M207.2 362.5L205.8 408.6M217.2 -6.0L216.4 38.4M217.2 39.8L216.7 63.4M217.2 126.3L217.0 151.2M217.2 162.3L217.6 197.7M217.2 234.3L217.9 259.0M217.2 272.2L218.3 316.8M217.2 354.1L218.6 396.5M227.7 0.9L228.4 50.1M227.7 58.1L228.1 84.7M227.7 85.8L226.3 137.1M227.7 138.6L226.7 190.7M227.7 191.1L228.1 206.8M227.7 216.6L228.0 260.8M227.7 355.4L226.9 408.1M233.5 5.4L234.4 52.7M233.5 61.6L232.2 87.3M233.5 98.0L233.2 120.4M233.5 120.6L234.1 145.2M233.5 184.5L232.0 233.4M233.5 239.2L233.0 271.1M233.5 281.0L234.5 317.0M233.5 318.3L232.0 365.9M241.9 -5.3L241.9 41.4M241.9 46.3L243.2 94.4M241.9 98.4L241.9 121.2M241.9 122.7L242.8 162.8M241.9 172.6L241.5 218.8M241.9 255.8L241.0 306.2M241.9 309.9L241.5 360.9M241.9 373.3L242.0 396.8M251.9 -0.6L250.9 27.7M251.9 39.5L250.9 80.6M251.9 86.8L250.8 132.5M251.9 138.9L251.0 189.2M251.9 238.5L251.4 258.8M251.9 266.2L251.0 286.8M251.9 300.4L253.3 344.3M251.9 386.6L251.0 430.7M258.1 -13.8L257.8 16.1M258.1 27.2L258.5 69.6M258.1 76.1L257.8 95.9M258.1 106.3L258.3 157.5M258.1 168.0L258.7 199.3M258.1 211.6L259.1 257.3M258.1 266.8L257.5 307.2M258.1 315.9L258.9 334.0M258.1 343.9L257.8 383.8M258.1 390.1L258.6 429.6M264.7 -0.4L264.6 45.5M264.7 59.2L263.6 74.7M264.7 85.7L263.5 138.3M264.7 146.3L264.7 182.5M264.7 191.4L264.4 239.4M264.7 252.7L264.3 275.3M264.7 310.0L264.4 326.3M264.7 326.5L265.3 357.6M264.7 362.6L265.4 387.5M273.3 -13.4L272.5 33.4M273.3 90.0L272.5 123.2M273.3 136.7L274.3 165.2M273.3 176.6L273.5 209.8M273.3 211.5L274.4 259.7M273.3 263.5L273.1 292.9M273.3 295.5L272.7 309.6M273.3 313.0L273.1 339.4M273.3 348.3L274.6 389.4M279.2 57.9L277.7 106.0M279.2 106.2L278.4 159.2M279.2 160.6L280.0 180.5M279.2 246.1L280.3 292.1M279.2 303.1L279.7 351.5M279.2 359.0L280.3 403.4M286.2 -13.0L284.9 6.7M286.2 13.3L286.2 33.2M286.2 40.8L287.3 90.1M286.2 96.7L287.3 133.7M286.2 171.2L284.8 211.3M286.2 266.5L286.2 320.7M286.2 333.3L286.6 348.7M286.2 353.4L286.2 402.8M296.4 -13.7L296.5 18.2M296.4 61.4L296.4 96.1M296.4 155.2L296.6 182.2M296.4 191.1L297.0 237.2M296.4 249.6L295.8 286.0M296.4 370.1L296.8 409.2M305.4 0.4L305.3 23.1M305.4 33.8L304.1 52.0M305.4 62.8L305.1 114.3M305.4 125.8L304.7 172.1M305.4 176.3L305.2 207.6M305.4 216.6L305.7 268.9M305.4 296.3L304.0 348.0M313.8 -7.6L312.9 10.6M313.8 12.7L314.4 27.3M313.8 29.0L314.9 82.6M313.8 84.4L313.0 99.2M313.8 109.4L314.6 131.1M313.8 141.1L312.6 190.2M313.8 199.0L315.1 242.1M313.8 245.6L312.3 299.2M313.8 341.2L312.8 367.9M313.8 380.0L313.4 413.9M321.9 25.3L321.7 65.8M321.9 128.4L320.6 165.6M321.9 277.2L321.7 315.9M321.9 328.3L322.2 357.8M321.9 370.3L320.4 417.4M330.0 106.0L331.0 143.4M330.0 201.6L330.9 219.1M330.0 270.0L329.9 308.8M330.0 311.7L330.8 336.2M330.0 371.0L331.2 394.6M338.6 -5.7L337.7 32.5M338.6 35.0L338.8 77.7M338.6 83.4L337.2 118.6M338.6 132.5L339.0 161.9M338.6 172.9L338.1 193.3M338.6 200.6L340.1 215.4M338.6 227.5L337.9 261.5M338.6 365.7L337.6 381.3M338.6 382.4L339.7 398.5M349.8 7.3L349.5 23.9M349.8 25.6L350.0 78.9M349.8 87.9L349.5 141.1M349.8 181.8L349.1 204.9M349.8 339.7L351.1 359.7M349.8 369.2L350.6 395.4M349.8 396.9L348.7 424.2M356.3 -12.8L354.8 7.0M356.3 17.1L357.6 39.1M356.3 106.9L355.1 126.6M356.3 139.6L356.2 188.2M356.3 192.9L356.7 240.7M356.3 242.7L356.9 265.7M356.3 297.2L355.6 328.0M356.3 339.8L356.3 367.5M356.3 372.0L357.7 423.0M367.2 0.0L366.5 22.7M367.2 26.3L368.6 48.6M367.2 62.6L366.5 114.5M367.2 127.0L366.5 143.4M367.2 176.5L368.2 196.3M367.2 203.6L368.4 225.3M367.2 228.3L366.2 265.7M367.2 276.5L365.9 319.7M367.2 320.9L366.5 359.9M367.2 362.8L368.1 401.9M373.9 -18.0L374.5 26.0M373.9 26.8L374.9 74.0M373.9 86.1L375.1 120.3M373.9 127.0L372.9 176.8M373.9 188.4L373.5 217.5M373.9 225.8L373.7 240.0M373.9 247.2L374.8 266.1M373.9 278.3L373.5 305.4M373.9 345.8L374.0 380.1M380.5 7.8L379.6 25.7M380.5 26.0L380.5 64.5M380.5 102.6L380.5 118.5M380.5 125.5L380.2 151.0M380.5 193.2L379.5 230.7M380.5 242.3L380.2 294.7M380.5 306.5L381.8 342.0M380.5 352.9L380.0 380.8M390.9 5.4L392.2 21.6M390.9 34.7L391.3 58.9M390.9 64.0L390.7 99.8M390.9 106.9L392.3 121.7M390.9 132.6L391.8 185.0M390.9 197.4L391.3 247.6M390.9 251.4L391.0 293.2M390.9 306.1L390.9 345.6M390.9 351.7L390.3 404.7M397.1 -2.2L396.4 51.0M397.1 57.6L396.0 93.4M397.1 95.3L396.5 121.3M397.1 124.7L398.1 142.3M397.1 150.9L396.2 188.2M397.1 198.2L397.4 231.1M397.1 237.7L396.2 264.4M397.1 271.6L395.6 301.3M397.1 306.2L397.3 355.5M397.1 392.2L395.8 437.9M405.2 -18.1L405.9 11.8M405.2 46.9L404.8 67.2M405.2 127.4L406.0 162.6M405.2 216.7L406.3 268.2M405.2 268.3L405.2 313.6M405.2 327.1L406.1 364.6M405.2 376.8L405.1 415.7M415.1 -11.2L414.7 18.8M415.1 76.6L414.5 108.8M415.1 110.8L413.8 148.4M415.1 200.3L414.8 253.6M415.1 266.4L415.3 280.8M415.1 287.8L415.2 339.5M415.1 353.5L415.6 388.7M415.1 394.1L414.6 422.8M424.6 -4.2L424.3 13.8M424.6 72.7L425.0 106.7M424.6 120.6L425.6 148.7M424.6 189.7L425.8 224.7M424.6 294.4L424.0 325.7M424.6 332.9L423.7 367.6M424.6 376.4L426.1 415.1M430.4 -7.7L430.9 38.6M430.4 73.4L430.4 114.8M430.4 122.5L430.5 147.4M430.4 161.4L429.2 198.9M430.4 201.1L429.2 246.3M430.4 292.7L428.9 339.7M430.4 350.5L429.9 377.8M430.4 380.1L431.6 405.1M438.0 -6.5L439.1 23.3M438.0 31.5L438.3 84.8M438.0 154.4L439.3 180.8M438.0 187.8L437.6 240.7M438.0 250.8L439.1 273.9M438.0 280.6L437.0 327.1M438.0 357.9L438.1 394.9M445.9 5.9L445.2 30.0M445.9 33.3L445.4 48.7M445.9 50.9L445.2 93.9M445.9 105.5L446.9 124.8M445.9 136.1L446.6 156.6M445.9 161.9L447.2 215.2M445.9 222.2L444.8 245.5M445.9 288.3L446.2 317.4M445.9 320.4L445.9 370.2M445.9 377.8L445.5 402.9M454.8 -10.7L453.8 19.3M454.8 31.2L453.6 58.4M454.8 66.3L454.2 95.1M454.8 96.0L453.7 122.8M454.8 132.8L456.0 158.4M454.8 221.3L455.3 246.6M454.8 255.9L455.3 284.3M454.8 323.2L453.6 363.0M454.8 375.8L453.4 419.9M461.3 -14.1L459.9 12.4M461.3 16.7L462.3 56.9M461.3 64.9L461.1 108.3M461.3 117.8L462.3 146.1M461.3 157.0L462.3 182.8M461.3 191.3L460.1 207.2M461.3 251.4L460.9 268.9M461.3 279.4L460.0 327.4M469.5 -18.4L469.5 24.3M469.5 37.3L468.1 56.5M469.5 66.3L469.6 113.4M469.5 126.9L468.7 167.1M469.5 167.9L468.6 196.6M469.5 200.9L470.0 220.5M469.5 223.8L469.3 247.8M469.5 260.9L470.6 289.3M469.5 291.3L470.4 328.3M469.5 336.0L470.0 381.2M469.5 389.6L470.5 422.5M476.7 -9.2L476.1 13.3M476.7 16.0L475.6 58.8M476.7 63.3L475.7 96.6M476.7 122.5L478.2 140.0M476.7 147.9L476.5 166.3M476.7 169.0L478.0 205.2M476.7 263.1L475.6 287.4M476.7 337.7L477.8 359.3M486.7 15.8L486.3 45.0M486.7 56.6L486.9 80.4M486.7 89.2L487.9 136.8M486.7 150.0L485.6 184.3M486.7 188.5L487.2 226.3M486.7 262.1L485.7 277.7M486.7 313.9L486.0 360.2M486.7 369.4L486.2 404.5M496.2 4.8L495.6 55.8M496.2 62.1L495.3 99.1M496.2 100.3L497.6 127.6M496.2 243.5L495.6 285.3M496.2 293.3L496.6 346.3M496.2 379.0L496.0 400.7M505.6 -8.8L505.7 29.0M505.6 36.9L504.7 67.1M505.6 79.6L506.7 116.1M505.6 119.6L504.9 137.5M505.6 144.4L505.9 181.1M505.6 182.7L504.4 217.7M505.6 223.4L506.7 240.4M505.6 248.1L504.5 291.4M505.6 305.3L506.6 348.9M505.6 383.3L506.5 429.0M512.6 -8.8L511.7 5.8M512.6 10.0L513.7 53.0M512.6 61.7L513.8 111.4M512.6 123.6L512.1 144.5M512.6 198.8L513.9 228.1M512.6 238.2L511.4 254.0M512.6 261.7L513.8 308.6M512.6 318.1L512.4 342.5M512.6 354.3L511.1 392.1M512.6 393.6L512.7 440.5M100.5 3.0L119.2 1.6M234.5 3.0L272.9 1.6M340.4 3.0L362.4 1.9M380.3 3.0L428.9 1.7M436.1 3.0L478.5 2.6M485.5 3.0L503.8 2.3M0.1 13.3L32.3 13.3M37.5 13.3L85.1 15.1M105.0 13.3L124.8 14.4M142.2 13.3L200.5 13.9M257.8 13.3L324.6 12.5M339.9 13.3L396.4 13.9M403.4 13.3L450.0 11.6M501.2 13.3L538.3 12.3M-19.8 23.5L43.5 23.3M54.9 23.5L88.6 21.8M139.7 23.5L206.5 25.2M218.1 23.5L240.3 23.9M305.2 23.5L368.3 23.5M386.3 23.5L418.6 21.6M458.2 23.5L497.0 23.9M514.3 23.5L566.0 24.5M49.3 37.9L74.4 38.1M195.4 37.9L234.5 37.3M235.6 37.9L275.2 38.4M281.9 37.9L325.6 37.0M364.8 37.9L434.2 38.4M448.7 37.9L483.8 36.6M486.6 37.9L544.5 39.2M-2.3 51.8L44.5 52.2M51.1 51.8L107.7 52.6M122.9 51.8L181.3 52.9M200.8 51.8L242.4 51.9M261.2 51.8L286.1 51.7M299.2 51.8L357.4 53.7M362.0 51.8L419.3 49.9M422.0 51.8L443.2 52.0M446.8 51.8L513.7 50.4M43.9 61.1L95.0 62.3M141.2 61.1L197.3 61.6M205.4 61.1L268.3 61.3M354.9 61.1L384.5 60.1M393.2 61.1L423.2 62.1M473.9 61.1L521.5 62.5M2.5 72.5L63.3 71.8M73.0 72.5L137.4 73.2M149.3 72.5L190.9 74.0M195.1 72.5L259.0 73.6M323.7 72.5L357.1 70.9M398.1 72.5L454.4 71.1M468.1 72.5L490.8 74.1M3.8 83.6L57.6 83.6M62.2 83.6L102.6 81.6M159.3 83.6L202.7 83.3M206.2 83.6L259.9 84.5M269.9 83.6L293.7 83.6M312.1 83.6L348.3 85.4M365.9 83.6L422.0 82.3M427.3 83.6L448.9 83.6M457.0 83.6L504.0 81.6M517.7 83.6L569.7 83.8M6.2 101.4L61.5 100.7M69.9 101.4L138.5 101.0M227.0 101.4L276.7 100.4M320.4 101.4L385.7 102.2M392.2 101.4L443.8 100.7M498.3 101.4L542.8 103.4M47.9 116.1L93.2 116.8M99.7 116.1L150.4 115.0M203.9 116.1L259.4 116.0M299.8 116.1L345.0 117.3M455.2 116.1L518.3 115.6M-16.3 132.4L9.7 130.8M16.8 132.4L76.6 132.2M130.8 132.4L172.2 133.6M187.4 132.4L213.2 131.9M223.6 132.4L253.9 131.8M261.5 132.4L280.5 132.7M314.4 132.4L349.2 133.8M458.5 132.4L495.9 132.2M503.2 132.4L558.3 132.1M-9.4 148.7L28.6 150.4M108.4 148.7L161.0 147.0M176.1 148.7L213.9 148.7M231.9 148.7L289.3 149.1M400.3 148.7L443.8 150.0M457.2 148.7L513.7 146.9M3.1 162.7L61.1 161.6M62.7 162.7L123.2 161.1M138.2 162.7L185.6 163.4M199.8 162.7L242.9 163.5M316.0 162.7L379.3 162.1M413.5 162.7L445.1 161.7M462.3 162.7L509.2 162.4M-12.3 179.4L16.2 179.6M23.7 179.4L65.8 179.8M73.1 179.4L132.8 181.1M143.9 179.4L164.6 179.6M172.8 179.4L220.2 178.5M285.3 179.4L334.1 181.2M343.0 179.4L406.6 179.2M441.4 179.4L490.4 181.1M501.6 179.4L561.3 180.1M-13.7 191.1L47.9 192.8M52.1 191.1L75.3 192.2M94.3 191.1L133.9 190.1M152.0 191.1L205.7 189.3M245.6 191.1L275.7 190.4M319.4 191.1L381.2 192.3M400.8 191.1L439.1 190.6M452.0 191.1L481.6 189.5M490.9 191.1L546.7 191.8M68.5 207.5L113.8 206.9M229.7 207.5L275.8 206.1M350.2 207.5L416.3 207.9M484.7 207.5L505.3 207.3M510.2 207.5L566.8 208.7M-3.2 217.2L19.8 218.3M31.7 217.2L73.7 217.2M75.6 217.2L127.2 217.5M134.3 217.2L171.8 215.8M175.2 217.2L242.1 218.5M259.6 217.2L302.6 215.5M320.2 217.2L344.2 217.3M346.6 217.2L388.9 217.3M399.1 217.2L436.1 216.8M440.2 217.2L464.8 218.6M474.8 217.2L539.2 218.9M-2.9 233.3L50.9 234.3M54.0 233.3L85.7 232.9M131.0 233.3L179.1 233.7M194.7 233.3L249.7 232.3M261.7 233.3L330.8 233.8M344.6 233.3L405.0 234.5M414.2 233.3L480.1 235.0M488.4 233.3L527.5 232.3M-15.5 248.4L20.4 247.2M80.0 248.4L139.2 248.4M232.7 248.4L261.0 249.8M346.5 248.4L403.2 249.7M503.7 248.4L563.4 248.1M50.3 264.5L117.5 266.3M169.0 264.5L197.3 263.4M207.1 264.5L272.4 265.3M427.7 264.5L450.2 265.8M-5.3 273.5L13.5 274.7M21.9 273.5L71.3 272.8M124.4 273.5L157.6 272.6M171.6 273.5L212.6 274.7M215.0 273.5L268.5 274.8M353.4 273.5L417.9 273.5M485.2 273.5L546.4 273.6M55.0 284.1L91.3 284.3M108.6 284.1L153.3 285.8M171.2 284.1L223.8 284.6M232.7 284.1L300.5 284.7M313.1 284.1L350.7 284.8M368.8 284.1L412.7 286.0M413.9 284.1L475.3 284.3M-18.9 299.8L16.0 301.6M33.8 299.8L59.3 300.1M149.9 299.8L196.2 301.7M209.2 299.8L269.0 299.3M288.3 299.8L343.2 298.9M410.2 299.8L446.3 299.9M493.7 299.8L527.9 299.0M8.9 317.5L36.6 319.3M40.5 317.5L75.2 316.0M80.4 317.5L118.9 319.4M161.9 317.5L223.4 318.6M265.0 317.5L312.1 318.5M365.0 317.5L398.0 316.6M486.6 317.5L517.3 317.7M-7.6 332.6L52.4 331.9M65.3 332.6L133.6 333.4M202.4 332.6L238.2 333.8M283.5 332.6L328.6 334.2M331.3 332.6L366.9 332.3M376.9 332.6L439.2 332.9M447.3 332.6L495.1 334.0M510.9 332.6L572.5 333.3M209.3 346.1L241.6 346.5M258.1 346.1L290.3 345.0M361.4 346.1L398.1 344.4M414.9 346.1L449.8 346.6M452.6 346.1L484.9 345.9M496.0 346.1L555.9 347.4M-1.1 357.1L34.6 357.4M38.9 357.1L98.2 358.5M114.4 357.1L160.3 358.3M160.9 357.1L205.1 355.4M217.7 357.1L273.4 356.7M283.6 357.1L332.2 358.6M418.6 357.1L487.8 357.1M490.5 357.1L532.1 358.0M-14.3 369.2L24.6 368.0M39.4 369.2L84.2 368.0M98.3 369.2L126.5 369.5M308.3 369.2L329.6 367.3M346.9 369.2L402.4 368.3M409.5 369.2L436.0 371.2M442.1 369.2L462.4 368.6M480.4 369.2L540.3 367.6M64.1 379.6L123.4 380.9M126.0 379.6L149.6 379.6M153.8 379.6L184.9 381.2M275.0 379.6L331.1 380.9M347.9 379.6L372.9 378.5M384.6 379.6L422.3 380.9M438.0 379.6L480.1 381.2M490.8 379.6L512.5 380.1M-0.8 393.0L27.9 394.6M35.5 393.0L58.9 391.5M62.9 393.0L104.7 393.5M118.8 393.0L159.7 393.9M160.7 393.0L203.2 393.7M217.5 393.0L248.0 393.7M294.8 393.0L316.0 394.9M466.1 393.0L486.1 391.9M504.7 393.0L534.1 394.7" fill="none" stroke="#faf8f2" stroke-width="1.3" stroke-linecap="round"/>
<clipPath id="hc"><polygon points="280.9,127.7 328.4,128.9 329.6,139.6 341.4,137.9 341.4,147.9 355.7,150.2 377.0,150.2 377.0,168.0 391.3,168.0 392.5,185.8 405.5,184.7 412.6,185.8 412.6,195.3 403.1,196.5 407.9,212.0 386.5,206.0 381.8,217.9 369.9,221.5 369.9,240.4 378.2,245.2 378.2,252.3 355.7,252.3 350.9,255.9 349.7,242.8 343.8,235.7 341.4,227.4 320.0,226.2 312.9,230.9 279.7,233.3 258.3,234.5 239.3,230.9 223.9,233.3 221.5,244.0 213.2,244.0 210.9,230.9 203.7,226.2 194.2,221.5 195.4,215.5 203.7,208.4 203.7,190.6 194.2,174.0 200.2,172.8 206.1,182.3 215.6,179.9 225.1,177.5 231.0,187.0 248.8,188.2 269.0,185.8 269.0,140.7 280.9,139.6"/></clipPath>
<g clip-path="url(#hc)"><path d="M245.9 197.1L246.5 217.6M208.3 129.7L222.0 128.1M411.1 187.7L429.5 188.6M226.8 208.6L246.3 210.1M340.4 136.1L361.4 134.9M200.8 237.9L202.1 263.5M349.7 245.0L351.5 261.9M398.0 239.6L395.8 252.0M404.5 183.4L419.1 183.4M278.1 172.6L299.0 175.0M342.7 246.0L372.5 247.0M229.6 237.3L257.5 237.7M349.6 154.8L370.2 153.5M207.8 236.5L217.8 238.3M283.5 147.1L285.1 172.6M203.6 206.0L204.9 220.7M386.0 252.5L416.0 251.4M210.8 204.2L209.0 220.3M327.1 147.8L329.3 162.1M403.0 241.9L402.8 260.3M334.4 203.6L356.0 206.3M304.5 182.8L317.8 181.6M407.2 194.2L415.4 193.7M320.4 130.5L342.3 127.9M330.8 187.2L346.5 188.5M354.9 130.8L355.9 158.1M248.7 186.0L263.8 185.1M262.2 174.9L276.8 174.1M362.4 131.4L386.5 130.3M242.5 230.1L240.6 246.8M346.2 140.9L345.2 165.6M289.6 236.7L288.6 257.7M386.9 185.3L384.6 203.9M235.6 230.5L247.6 229.1M370.0 209.5L385.6 207.3M257.6 228.8L256.7 245.2M285.5 180.0L296.9 177.0M399.6 239.8L417.2 242.5M396.2 156.2L422.6 157.2M307.1 164.7L305.5 174.1M322.3 164.5L331.3 166.9M345.2 245.3L373.0 245.8M196.9 222.7L195.7 243.9M308.4 180.5L329.9 179.6M249.0 237.4L250.7 252.5M237.0 195.9L248.8 197.6M394.9 230.4L403.1 231.1M382.0 134.3L380.6 152.9M286.2 188.1L294.3 185.4M221.7 143.8L224.5 168.9M212.8 191.8L211.7 206.8M335.0 202.5L333.2 217.1M221.0 198.6L237.3 196.0M232.9 175.4L258.1 174.7M368.7 207.1L367.9 225.0M347.2 181.4L365.4 179.9M310.8 216.3L310.4 232.8M385.8 246.9L388.2 270.8M251.2 186.9L253.0 208.2M387.4 228.6L411.6 229.0M216.5 202.6L214.3 226.1M203.7 139.7L205.9 151.2M199.1 234.9L201.2 256.3M376.3 249.0L401.9 246.2M361.3 192.9L371.6 194.4M397.7 135.8L398.1 160.3M246.8 150.8L247.5 173.9M279.8 174.7L278.9 191.0M212.2 191.5L229.2 193.0M229.0 215.7L251.8 215.8M299.5 209.7L310.7 207.2M357.1 244.4L374.8 245.7M234.6 162.0L235.1 176.3M244.6 215.8L259.2 217.0M284.1 236.4L298.0 234.7M199.0 188.9L197.1 204.1M264.2 226.3L267.2 243.9M324.6 187.4L350.7 187.8M298.9 219.5L315.7 220.9M403.3 187.4L401.7 209.7M341.2 249.8L354.6 247.9M250.4 151.8L277.3 154.2M249.6 237.9L249.1 260.4M212.7 139.8L227.2 138.9M320.5 213.8L319.5 230.5M299.9 154.7L328.9 154.0M312.7 143.1L313.7 153.4M387.4 243.4L390.1 258.9M362.4 224.2L363.4 245.3M369.7 161.7L398.9 162.8M310.9 142.4L310.0 164.8M341.9 199.9L342.8 220.5M233.0 241.0L243.8 243.6M224.8 170.1L246.0 170.4M335.2 186.1L333.2 195.5M350.1 223.8L374.3 223.0M252.0 176.7L260.9 176.7M247.9 225.7L246.9 241.7M312.0 226.0L314.1 236.2M253.0 140.7L254.6 163.2M234.3 152.0L235.8 176.3M357.2 203.2L356.6 215.0M309.0 200.2L307.5 223.8M200.6 230.0L229.4 229.3M314.5 202.0L344.0 203.2M259.3 237.2L259.9 259.8M194.5 225.8L213.3 226.0M294.4 152.6L303.2 152.6M334.8 184.4L363.9 186.8M223.6 228.6L232.7 227.8M244.9 137.9L273.3 136.8M383.8 216.2L385.9 236.2M396.1 218.9L411.6 220.8M397.1 237.4L398.7 255.1M217.8 133.4L216.0 144.6M302.4 216.8L319.7 217.7M260.4 187.0L277.2 185.1M390.1 219.4L389.3 238.0M324.0 156.4L322.3 180.1M225.3 186.4L223.5 197.8M282.0 149.4L279.7 160.7M300.9 135.6L300.6 151.7M347.4 134.5L346.7 143.0M404.5 155.8L404.3 167.1M329.7 172.0L327.0 194.5M254.0 228.1L256.6 242.1M248.5 161.8L270.3 160.8M214.4 214.7L235.5 211.7M200.6 139.5L197.8 148.6M336.6 242.3L339.5 259.9M369.2 244.5L377.9 243.3M326.3 248.2L325.1 273.2M219.0 177.5L220.1 204.1M232.1 222.0L258.5 222.3M395.3 174.1L393.7 197.7M298.8 162.2L300.1 182.3M348.9 177.1L346.8 199.3M199.0 187.3L221.9 184.9M245.7 235.1L273.0 237.4M292.1 241.9L307.4 241.1M209.7 178.7L220.0 179.1M218.0 138.3L231.3 135.6M227.3 209.9L235.5 208.2M404.9 156.0L422.1 157.6M325.7 228.2L337.9 226.2M211.2 232.8L208.4 260.2M237.4 241.4L237.2 253.9M374.8 206.2L399.6 208.4M269.4 204.6L267.1 229.3M323.6 231.5L323.8 248.8" fill="none" stroke="#c9c3b0" stroke-width="2.6" stroke-linecap="round"/><path d="M245.9 197.1L246.5 217.6M208.3 129.7L222.0 128.1M411.1 187.7L429.5 188.6M226.8 208.6L246.3 210.1M340.4 136.1L361.4 134.9M200.8 237.9L202.1 263.5M349.7 245.0L351.5 261.9M398.0 239.6L395.8 252.0M404.5 183.4L419.1 183.4M278.1 172.6L299.0 175.0M342.7 246.0L372.5 247.0M229.6 237.3L257.5 237.7M349.6 154.8L370.2 153.5M207.8 236.5L217.8 238.3M283.5 147.1L285.1 172.6M203.6 206.0L204.9 220.7M386.0 252.5L416.0 251.4M210.8 204.2L209.0 220.3M327.1 147.8L329.3 162.1M403.0 241.9L402.8 260.3M334.4 203.6L356.0 206.3M304.5 182.8L317.8 181.6M407.2 194.2L415.4 193.7M320.4 130.5L342.3 127.9M330.8 187.2L346.5 188.5M354.9 130.8L355.9 158.1M248.7 186.0L263.8 185.1M262.2 174.9L276.8 174.1M362.4 131.4L386.5 130.3M242.5 230.1L240.6 246.8M346.2 140.9L345.2 165.6M289.6 236.7L288.6 257.7M386.9 185.3L384.6 203.9M235.6 230.5L247.6 229.1M370.0 209.5L385.6 207.3M257.6 228.8L256.7 245.2M285.5 180.0L296.9 177.0M399.6 239.8L417.2 242.5M396.2 156.2L422.6 157.2M307.1 164.7L305.5 174.1M322.3 164.5L331.3 166.9M345.2 245.3L373.0 245.8M196.9 222.7L195.7 243.9M308.4 180.5L329.9 179.6M249.0 237.4L250.7 252.5M237.0 195.9L248.8 197.6M394.9 230.4L403.1 231.1M382.0 134.3L380.6 152.9M286.2 188.1L294.3 185.4M221.7 143.8L224.5 168.9M212.8 191.8L211.7 206.8M335.0 202.5L333.2 217.1M221.0 198.6L237.3 196.0M232.9 175.4L258.1 174.7M368.7 207.1L367.9 225.0M347.2 181.4L365.4 179.9M310.8 216.3L310.4 232.8M385.8 246.9L388.2 270.8M251.2 186.9L253.0 208.2M387.4 228.6L411.6 229.0M216.5 202.6L214.3 226.1M203.7 139.7L205.9 151.2M199.1 234.9L201.2 256.3M376.3 249.0L401.9 246.2M361.3 192.9L371.6 194.4M397.7 135.8L398.1 160.3M246.8 150.8L247.5 173.9M279.8 174.7L278.9 191.0M212.2 191.5L229.2 193.0M229.0 215.7L251.8 215.8M299.5 209.7L310.7 207.2M357.1 244.4L374.8 245.7M234.6 162.0L235.1 176.3M244.6 215.8L259.2 217.0M284.1 236.4L298.0 234.7M199.0 188.9L197.1 204.1M264.2 226.3L267.2 243.9M324.6 187.4L350.7 187.8M298.9 219.5L315.7 220.9M403.3 187.4L401.7 209.7M341.2 249.8L354.6 247.9M250.4 151.8L277.3 154.2M249.6 237.9L249.1 260.4M212.7 139.8L227.2 138.9M320.5 213.8L319.5 230.5M299.9 154.7L328.9 154.0M312.7 143.1L313.7 153.4M387.4 243.4L390.1 258.9M362.4 224.2L363.4 245.3M369.7 161.7L398.9 162.8M310.9 142.4L310.0 164.8M341.9 199.9L342.8 220.5M233.0 241.0L243.8 243.6M224.8 170.1L246.0 170.4M335.2 186.1L333.2 195.5M350.1 223.8L374.3 223.0M252.0 176.7L260.9 176.7M247.9 225.7L246.9 241.7M312.0 226.0L314.1 236.2M253.0 140.7L254.6 163.2M234.3 152.0L235.8 176.3M357.2 203.2L356.6 215.0M309.0 200.2L307.5 223.8M200.6 230.0L229.4 229.3M314.5 202.0L344.0 203.2M259.3 237.2L259.9 259.8M194.5 225.8L213.3 226.0M294.4 152.6L303.2 152.6M334.8 184.4L363.9 186.8M223.6 228.6L232.7 227.8M244.9 137.9L273.3 136.8M383.8 216.2L385.9 236.2M396.1 218.9L411.6 220.8M397.1 237.4L398.7 255.1M217.8 133.4L216.0 144.6M302.4 216.8L319.7 217.7M260.4 187.0L277.2 185.1M390.1 219.4L389.3 238.0M324.0 156.4L322.3 180.1M225.3 186.4L223.5 197.8M282.0 149.4L279.7 160.7M300.9 135.6L300.6 151.7M347.4 134.5L346.7 143.0M404.5 155.8L404.3 167.1M329.7 172.0L327.0 194.5M254.0 228.1L256.6 242.1M248.5 161.8L270.3 160.8M214.4 214.7L235.5 211.7M200.6 139.5L197.8 148.6M336.6 242.3L339.5 259.9M369.2 244.5L377.9 243.3M326.3 248.2L325.1 273.2M219.0 177.5L220.1 204.1M232.1 222.0L258.5 222.3M395.3 174.1L393.7 197.7M298.8 162.2L300.1 182.3M348.9 177.1L346.8 199.3M199.0 187.3L221.9 184.9M245.7 235.1L273.0 237.4M292.1 241.9L307.4 241.1M209.7 178.7L220.0 179.1M218.0 138.3L231.3 135.6M227.3 209.9L235.5 208.2M404.9 156.0L422.1 157.6M325.7 228.2L337.9 226.2M211.2 232.8L208.4 260.2M237.4 241.4L237.2 253.9M374.8 206.2L399.6 208.4M269.4 204.6L267.1 229.3M323.6 231.5L323.8 248.8" fill="none" stroke="#fdfcf8" stroke-width="1.7" stroke-linecap="round"/></g>
<polygon points="0.0,0.0 208.0,0.0 208.0,27.8 192.6,24.4 175.3,14.0 169.3,21.0 169.3,83.0 155.6,87.7 153.9,103.0 161.5,126.4 137.5,89.4 99.7,51.6 75.6,41.3 54.0,40.0 51.6,92.8 43.8,93.7 47.3,122.0 55.9,120.4 57.6,140.0 33.0,146.0 8.0,155.0 0.0,158.0" fill="#eef0f6"/>
<polygon points="239.3,0.0 273.0,0.0 273.0,18.3 243.6,15.7" fill="#eef0f6"/>
<polygon points="436.0,0.0 520.0,0.0 520.0,103.0 506.0,95.0 492.0,83.5 480.0,70.5 470.0,56.0 457.5,34.4 444.3,13.8 428.0,0.0" fill="#eef0f6"/>
<polygon points="352.0,323.0 366.9,323.0 366.9,316.0 391.0,316.0 404.7,321.0 414.0,328.3 426.0,341.0 437.0,354.0 452.5,369.4 462.0,378.0 470.0,384.0 470.0,400.0 352.0,400.0" fill="#eef0f6"/>
<polygon points="389,0 428,0 444,14 458,33 436,33 430,31 390,31" fill="#efeec4"/>
<rect x="410" y="22" width="14" height="8" fill="#b9dc8c"/>
<rect x="293.5" y="80" width="30" height="12.8" fill="#b4d68c"/>
<rect x="137.5" y="62.8" width="26.5" height="19.7" fill="#cfd8cc"/>
<rect x="275.4" y="363.4" width="46.5" height="16.4" fill="#b4d68c"/>
<polygon points="365.2,323.2 383.2,320.6 439.7,364.3 426.8,374.5 383.2,379.7 365.2,364.3" fill="#b4d68c"/>
<rect x="108.3" y="340.2" width="10.3" height="20.6" fill="#b4d68c"/><rect x="118.6" y="350" width="12" height="11" fill="#b4d68c"/><rect x="0" y="361" width="10" height="27" fill="#b4d68c"/>
<rect x="276" y="152.6" width="6" height="12" fill="#b4d68c"/><rect x="355.7" y="150.2" width="21.3" height="17.8" fill="#b4d68c"/><rect x="497" y="278" width="12" height="16" fill="#b4d68c"/>
<polygon points="383.2,323 404,339 427,359 420,366 396,346 376,331" fill="#f2f4f8"/>
<polyline points="0.0,2.0 20.0,1.5 43.0,3.4 67.0,1.0" fill="none" stroke="#9c9ea0" stroke-width="4.6" stroke-linejoin="round" stroke-linecap="round" />
<polyline points="67.0,1.7 100.0,45.0 140.0,98.0 160.0,124.0" fill="none" stroke="#9c9ea0" stroke-width="4.800000000000001" stroke-linejoin="round" stroke-linecap="round" />
<polyline points="44.7,7.7 72.0,30.0 96.0,50.0 137.5,96.0 158.0,122.0" fill="none" stroke="#9c9ea0" stroke-width="4.0" stroke-linejoin="round" stroke-linecap="round" />
<polyline points="103.0,0.0 106.6,13.8 120.4,37.8 137.5,68.8 146.0,84.0" fill="none" stroke="#9c9ea0" stroke-width="4.0" stroke-linejoin="round" stroke-linecap="round" />
<polyline points="20.6,8.6 20.6,46.0" fill="none" stroke="#9c9ea0" stroke-width="4.0" stroke-linejoin="round" stroke-linecap="round" />
<polyline points="0.0,46.4 34.0,45.5 41.0,38.7 72.0,39.5 96.0,50.0" fill="none" stroke="#9c9ea0" stroke-width="4.0" stroke-linejoin="round" stroke-linecap="round" />
<polyline points="0.0,69.0 51.6,89.4 100.0,93.0 132.0,96.0" fill="none" stroke="#9c9ea0" stroke-width="4.0" stroke-linejoin="round" stroke-linecap="round" />
<polyline points="0.0,93.7 26.0,91.0 51.6,92.8" fill="none" stroke="#9c9ea0" stroke-width="3.8000000000000003" stroke-linejoin="round" stroke-linecap="round" />
<polyline points="0.0,2.0 20.0,1.5 43.0,3.4 67.0,1.0" fill="none" stroke="#e6e9ec" stroke-width="3" stroke-linejoin="round" stroke-linecap="round" />
<polyline points="67.0,1.7 100.0,45.0 140.0,98.0 160.0,124.0" fill="none" stroke="#e6e9ec" stroke-width="3.2" stroke-linejoin="round" stroke-linecap="round" />
<polyline points="44.7,7.7 72.0,30.0 96.0,50.0 137.5,96.0 158.0,122.0" fill="none" stroke="#e6e9ec" stroke-width="2.4" stroke-linejoin="round" stroke-linecap="round" />
<polyline points="103.0,0.0 106.6,13.8 120.4,37.8 137.5,68.8 146.0,84.0" fill="none" stroke="#e6e9ec" stroke-width="2.4" stroke-linejoin="round" stroke-linecap="round" />
<polyline points="20.6,8.6 20.6,46.0" fill="none" stroke="#e6e9ec" stroke-width="2.4" stroke-linejoin="round" stroke-linecap="round" />
<polyline points="0.0,46.4 34.0,45.5 41.0,38.7 72.0,39.5 96.0,50.0" fill="none" stroke="#e6e9ec" stroke-width="2.4" stroke-linejoin="round" stroke-linecap="round" />
<polyline points="0.0,69.0 51.6,89.4 100.0,93.0 132.0,96.0" fill="none" stroke="#e6e9ec" stroke-width="2.4" stroke-linejoin="round" stroke-linecap="round" />
<polyline points="0.0,93.7 26.0,91.0 51.6,92.8" fill="none" stroke="#e6e9ec" stroke-width="2.2" stroke-linejoin="round" stroke-linecap="round" />
<polyline points="239.3,3.4 192.9,80.8" fill="none" stroke="#99958a" stroke-width="4.0" stroke-linejoin="round" stroke-linecap="round" />
<polyline points="174.0,13.8 205.0,29.0 246.0,31.8 263.4,44.7 277.0,58.5 294.0,65.0 323.6,80.0" fill="none" stroke="#99958a" stroke-width="4.0" stroke-linejoin="round" stroke-linecap="round" />
<polyline points="320.0,0.0 322.0,40.0 325.0,79.0" fill="none" stroke="#99958a" stroke-width="3.8" stroke-linejoin="round" stroke-linecap="round" />
<polyline points="284.0,17.0 285.0,50.0 287.5,90.0" fill="none" stroke="#99958a" stroke-width="3.6" stroke-linejoin="round" stroke-linecap="round" />
<polyline points="208.0,0.0 208.0,28.0" fill="none" stroke="#99958a" stroke-width="3.6" stroke-linejoin="round" stroke-linecap="round" />
<polyline points="191.0,40.0 190.0,83.0" fill="none" stroke="#99958a" stroke-width="3.6" stroke-linejoin="round" stroke-linecap="round" />
<polyline points="243.6,15.7 273.0,18.3 284.0,17.0" fill="none" stroke="#99958a" stroke-width="3.2" stroke-linejoin="round" stroke-linecap="round" />
<polyline points="239.3,3.4 192.9,80.8" fill="none" stroke="#faf9f4" stroke-width="2.2" stroke-linejoin="round" stroke-linecap="round" />
<polyline points="174.0,13.8 205.0,29.0 246.0,31.8 263.4,44.7 277.0,58.5 294.0,65.0 323.6,80.0" fill="none" stroke="#faf9f4" stroke-width="2.2" stroke-linejoin="round" stroke-linecap="round" />
<polyline points="320.0,0.0 322.0,40.0 325.0,79.0" fill="none" stroke="#faf9f4" stroke-width="2.0" stroke-linejoin="round" stroke-linecap="round" />
<polyline points="284.0,17.0 285.0,50.0 287.5,90.0" fill="none" stroke="#faf9f4" stroke-width="1.8000000000000003" stroke-linejoin="round" stroke-linecap="round" />
<polyline points="208.0,0.0 208.0,28.0" fill="none" stroke="#faf9f4" stroke-width="1.8000000000000003" stroke-linejoin="round" stroke-linecap="round" />
<polyline points="191.0,40.0 190.0,83.0" fill="none" stroke="#faf9f4" stroke-width="1.8000000000000003" stroke-linejoin="round" stroke-linecap="round" />
<polyline points="243.6,15.7 273.0,18.3 284.0,17.0" fill="none" stroke="#faf9f4" stroke-width="1.4" stroke-linejoin="round" stroke-linecap="round" />
<polyline points="0.0,223.4 39.5,208.0 75.6,194.0 103.0,189.0 174.0,189.0 196.0,190.0" fill="none" stroke="#cfc6ae" stroke-width="4.6" stroke-linejoin="round" stroke-linecap="round" />
<polyline points="0.0,244.0 34.4,240.6 68.8,226.8 103.0,220.0 129.0,214.0 174.0,214.8 196.0,218.0" fill="none" stroke="#cfc6ae" stroke-width="4.6" stroke-linejoin="round" stroke-linecap="round" />
<polyline points="161.5,125.5 154.7,134.0 151.3,185.6 149.6,216.5 146.0,244.0 135.8,254.4 131.0,295.0 133.5,328.3 138.6,359.0 140.0,400.0" fill="none" stroke="#cfc6ae" stroke-width="4.4" stroke-linejoin="round" stroke-linecap="round" />
<polyline points="82.5,141.0 68.8,194.0 51.6,268.0 48.0,283.0" fill="none" stroke="#cfc6ae" stroke-width="3.8" stroke-linejoin="round" stroke-linecap="round" />
<polyline points="413.0,195.0 520.0,195.6" fill="none" stroke="#cfc6ae" stroke-width="4.8" stroke-linejoin="round" stroke-linecap="round" />
<polyline points="349.8,226.0 350.0,400.0" fill="none" stroke="#cfc6ae" stroke-width="4.2" stroke-linejoin="round" stroke-linecap="round" />
<polyline points="219.5,233.4 220.7,295.0 223.3,400.0" fill="none" stroke="#cfc6ae" stroke-width="3.8" stroke-linejoin="round" stroke-linecap="round" />
<polyline points="391.0,34.5 390.0,134.0 390.0,192.5" fill="none" stroke="#cfc6ae" stroke-width="3.5999999999999996" stroke-linejoin="round" stroke-linecap="round" />
<polyline points="328.6,87.7 330.0,130.0" fill="none" stroke="#cfc6ae" stroke-width="3.5999999999999996" stroke-linejoin="round" stroke-linecap="round" />
<polyline points="451.0,56.7 396.0,98.0" fill="none" stroke="#cfc6ae" stroke-width="3.4000000000000004" stroke-linejoin="round" stroke-linecap="round" />
<polyline points="458.0,111.8 451.0,134.0 446.0,268.0 462.0,274.0" fill="none" stroke="#cfc6ae" stroke-width="3.5999999999999996" stroke-linejoin="round" stroke-linecap="round" />
<polyline points="403.0,201.0 416.8,211.4 430.5,214.8 434.0,226.8 444.3,245.8 458.0,268.0 468.0,290.0" fill="none" stroke="#cfc6ae" stroke-width="4.2" stroke-linejoin="round" stroke-linecap="round" />
<polyline points="485.5,86.0 485.5,134.0 483.8,192.5" fill="none" stroke="#cfc6ae" stroke-width="3.4000000000000004" stroke-linejoin="round" stroke-linecap="round" />
<polyline points="428.8,31.8 423.7,134.0 418.5,192.5" fill="none" stroke="#cfc6ae" stroke-width="3.4000000000000004" stroke-linejoin="round" stroke-linecap="round" />
<polyline points="0.0,282.6 65.3,284.3 75.6,290.4 89.4,297.2 103.0,299.0 174.0,296.0 184.8,292.4 218.2,292.4 231.0,297.5 241.3,313.0 246.2,315.3 294.4,317.0 348.0,323.0" fill="none" stroke="#cfc6ae" stroke-width="4.0" stroke-linejoin="round" stroke-linecap="round" />
<polyline points="155.6,87.7 174.0,85.0 242.8,89.4 294.4,93.7 325.3,94.6 325.3,79.0 348.0,78.2 389.3,78.0" fill="none" stroke="#cfc6ae" stroke-width="3.8" stroke-linejoin="round" stroke-linecap="round" />
<polyline points="0.0,156.6 8.0,154.0 33.0,145.0 56.5,140.0 85.0,137.0 113.0,133.5 133.5,128.0 161.5,125.5" fill="none" stroke="#cfc6ae" stroke-width="3.8" stroke-linejoin="round" stroke-linecap="round" />
<polyline points="260.0,274.4 350.0,274.4" fill="none" stroke="#cfc6ae" stroke-width="3.5999999999999996" stroke-linejoin="round" stroke-linecap="round" />
<polyline points="366.9,316.0 391.0,316.0 404.7,321.0 414.0,328.3 426.0,341.0 437.0,354.0 452.5,369.4 462.0,378.0 470.0,384.0" fill="none" stroke="#cfc6ae" stroke-width="3.5999999999999996" stroke-linejoin="round" stroke-linecap="round" />
<polyline points="196.0,205.0 240.0,203.0 300.0,200.0 350.0,197.0 413.0,195.0" fill="none" stroke="#cfc6ae" stroke-width="2.8" stroke-linejoin="round" stroke-linecap="round" />
<polyline points="0.0,223.4 39.5,208.0 75.6,194.0 103.0,189.0 174.0,189.0 196.0,190.0" fill="none" stroke="#fbfaf6" stroke-width="3.4" stroke-linejoin="round" stroke-linecap="round" />
<polyline points="0.0,244.0 34.4,240.6 68.8,226.8 103.0,220.0 129.0,214.0 174.0,214.8 196.0,218.0" fill="none" stroke="#fbfaf6" stroke-width="3.4" stroke-linejoin="round" stroke-linecap="round" />
<polyline points="161.5,125.5 154.7,134.0 151.3,185.6 149.6,216.5 146.0,244.0 135.8,254.4 131.0,295.0 133.5,328.3 138.6,359.0 140.0,400.0" fill="none" stroke="#fbfaf6" stroke-width="3.2" stroke-linejoin="round" stroke-linecap="round" />
<polyline points="82.5,141.0 68.8,194.0 51.6,268.0 48.0,283.0" fill="none" stroke="#fbfaf6" stroke-width="2.6" stroke-linejoin="round" stroke-linecap="round" />
<polyline points="413.0,195.0 520.0,195.6" fill="none" stroke="#fbfaf6" stroke-width="3.6" stroke-linejoin="round" stroke-linecap="round" />
<polyline points="349.8,226.0 350.0,400.0" fill="none" stroke="#fbfaf6" stroke-width="3" stroke-linejoin="round" stroke-linecap="round" />
<polyline points="219.5,233.4 220.7,295.0 223.3,400.0" fill="none" stroke="#fbfaf6" stroke-width="2.6" stroke-linejoin="round" stroke-linecap="round" />
<polyline points="391.0,34.5 390.0,134.0 390.0,192.5" fill="none" stroke="#fbfaf6" stroke-width="2.4" stroke-linejoin="round" stroke-linecap="round" />
<polyline points="328.6,87.7 330.0,130.0" fill="none" stroke="#fbfaf6" stroke-width="2.4" stroke-linejoin="round" stroke-linecap="round" />
<polyline points="451.0,56.7 396.0,98.0" fill="none" stroke="#fbfaf6" stroke-width="2.2" stroke-linejoin="round" stroke-linecap="round" />
<polyline points="458.0,111.8 451.0,134.0 446.0,268.0 462.0,274.0" fill="none" stroke="#fbfaf6" stroke-width="2.4" stroke-linejoin="round" stroke-linecap="round" />
<polyline points="403.0,201.0 416.8,211.4 430.5,214.8 434.0,226.8 444.3,245.8 458.0,268.0 468.0,290.0" fill="none" stroke="#fbfaf6" stroke-width="3" stroke-linejoin="round" stroke-linecap="round" />
<polyline points="485.5,86.0 485.5,134.0 483.8,192.5" fill="none" stroke="#fbfaf6" stroke-width="2.2" stroke-linejoin="round" stroke-linecap="round" />
<polyline points="428.8,31.8 423.7,134.0 418.5,192.5" fill="none" stroke="#fbfaf6" stroke-width="2.2" stroke-linejoin="round" stroke-linecap="round" />
<polyline points="0.0,282.6 65.3,284.3 75.6,290.4 89.4,297.2 103.0,299.0 174.0,296.0 184.8,292.4 218.2,292.4 231.0,297.5 241.3,313.0 246.2,315.3 294.4,317.0 348.0,323.0" fill="none" stroke="#fbfaf6" stroke-width="2.8" stroke-linejoin="round" stroke-linecap="round" />
<polyline points="155.6,87.7 174.0,85.0 242.8,89.4 294.4,93.7 325.3,94.6 325.3,79.0 348.0,78.2 389.3,78.0" fill="none" stroke="#fbfaf6" stroke-width="2.6" stroke-linejoin="round" stroke-linecap="round" />
<polyline points="0.0,156.6 8.0,154.0 33.0,145.0 56.5,140.0 85.0,137.0 113.0,133.5 133.5,128.0 161.5,125.5" fill="none" stroke="#fbfaf6" stroke-width="2.6" stroke-linejoin="round" stroke-linecap="round" />
<polyline points="260.0,274.4 350.0,274.4" fill="none" stroke="#fbfaf6" stroke-width="2.4" stroke-linejoin="round" stroke-linecap="round" />
<polyline points="366.9,316.0 391.0,316.0 404.7,321.0 414.0,328.3 426.0,341.0 437.0,354.0 452.5,369.4 462.0,378.0 470.0,384.0" fill="none" stroke="#fbfaf6" stroke-width="2.4" stroke-linejoin="round" stroke-linecap="round" />
<polyline points="196.0,205.0 240.0,203.0 300.0,200.0 350.0,197.0 413.0,195.0" fill="none" stroke="#fbfaf6" stroke-width="1.6" stroke-linejoin="round" stroke-linecap="round" />
<polyline points="420.0,-4.0 422.8,-2.1 426.7,0.5 431.3,3.6 436.1,7.0 440.6,10.5 444.3,13.8 447.2,17.1 449.5,20.4 451.6,23.9 453.6,27.4 455.5,30.9 457.5,34.4 459.7,38.0 461.8,41.8 463.9,45.6 466.0,49.3 468.1,52.8 470.0,56.0 471.8,58.8 473.4,61.4 475.0,63.8 476.6,66.0 478.2,68.3 480.0,70.5 481.9,72.8 483.8,75.0 485.8,77.2 487.8,79.3 489.9,81.4 492.0,83.5 494.2,85.5 496.4,87.5 498.7,89.5 501.0,91.4 503.5,93.2 506.0,95.0 508.9,96.7 512.1,98.5 515.4,100.2 518.5,101.8 521.1,103.0 523.0,104.0" fill="none" stroke="#c49a4a" stroke-width="12.4" stroke-linejoin="round" stroke-linecap="round" />
<polyline points="420.0,-4.0 422.8,-2.1 426.7,0.5 431.3,3.6 436.1,7.0 440.6,10.5 444.3,13.8 447.2,17.1 449.5,20.4 451.6,23.9 453.6,27.4 455.5,30.9 457.5,34.4 459.7,38.0 461.8,41.8 463.9,45.6 466.0,49.3 468.1,52.8 470.0,56.0 471.8,58.8 473.4,61.4 475.0,63.8 476.6,66.0 478.2,68.3 480.0,70.5 481.9,72.8 483.8,75.0 485.8,77.2 487.8,79.3 489.9,81.4 492.0,83.5 494.2,85.5 496.4,87.5 498.7,89.5 501.0,91.4 503.5,93.2 506.0,95.0 508.9,96.7 512.1,98.5 515.4,100.2 518.5,101.8 521.1,103.0 523.0,104.0" fill="none" stroke="#fbe98e" stroke-width="10.2" stroke-linejoin="round" stroke-linecap="round" />
<polyline points="478.7,-1.0 468.4,13.8 461.5,29.2" fill="none" stroke="#8c8c8c" stroke-width="2.6" stroke-linejoin="round" stroke-linecap="round" />
<polyline points="478.7,-1.0 468.4,13.8 461.5,29.2" fill="none" stroke="#f4f4f4" stroke-width="1.4" stroke-linejoin="round" stroke-linecap="round" />
<polyline points="14.0,352.0 40.0,365.0 68.8,378.0 120.0,398.7 130.0,404.0" fill="none" stroke="#d9c070" stroke-width="7.5" stroke-linejoin="round" stroke-linecap="round" />
<polyline points="14.0,352.0 40.0,365.0 68.8,378.0 120.0,398.7 130.0,404.0" fill="none" stroke="#fbe98e" stroke-width="6" stroke-linejoin="round" stroke-linecap="round" />
<path d="M0.0 156.6 L8.0 154.0 L33.0 145.0 L56.5 140.0 L85.0 137.0 L113.0 133.5 L133.5 128.0 L154.0 126.0 L161.5 125.5 L153.9 103.0 L155.6 87.7 L174.0 85.0 L242.8 89.4 L294.4 93.7 L325.3 94.6 L325.3 79.0 L348.0 78.2 L389.3 78.0 L390.0 31.8 L430.5 31.8 L436.0 34.4 L458.0 35.0 L466.6 22.4 L503.6 23.2 L504.5 34.4 L520.0 34.4 L520.0 274.0 L462.3 274.0 L468.4 290.4 L478.7 309.3 L494.0 312.7 L509.6 319.6 L520.0 330.0 L520.0 400.0 L470.0 400.0 L470.0 384.0 L462.0 378.0 L452.5 369.4 L437.0 354.0 L426.0 341.0 L414.0 328.3 L404.7 321.0 L391.0 316.0 L366.9 316.0 L366.9 323.0 L348.0 323.0 L328.7 321.3 L294.4 317.0 L246.2 315.3 L241.0 311.0 L237.6 297.2 L217.0 292.0 L184.3 291.2 L174.0 294.0 L103.0 299.0 L89.4 297.2 L75.6 290.4 L65.3 284.3 L0.0 282.6 Z M280.9 127.7 L328.4 128.9 L329.6 139.6 L341.4 137.9 L341.4 147.9 L355.7 150.2 L377.0 150.2 L377.0 168.0 L391.3 168.0 L392.5 185.8 L405.5 184.7 L412.6 185.8 L412.6 195.3 L403.1 196.5 L407.9 212.0 L386.5 206.0 L381.8 217.9 L369.9 221.5 L369.9 240.4 L378.2 245.2 L378.2 252.3 L355.7 252.3 L350.9 255.9 L349.7 242.8 L343.8 235.7 L341.4 227.4 L320.0 226.2 L312.9 230.9 L279.7 233.3 L258.3 234.5 L239.3 230.9 L223.9 233.3 L221.5 244.0 L213.2 244.0 L210.9 230.9 L203.7 226.2 L194.2 221.5 L195.4 215.5 L203.7 208.4 L203.7 190.6 L194.2 174.0 L200.2 172.8 L206.1 182.3 L215.6 179.9 L225.1 177.5 L231.0 187.0 L248.8 188.2 L269.0 185.8 L269.0 140.7 L280.9 139.6 Z" fill="#fa244c" fill-opacity="0.52" fill-rule="evenodd"/>
<clipPath id="rc"><polygon points="0.0,156.6 8.0,154.0 33.0,145.0 56.5,140.0 85.0,137.0 113.0,133.5 133.5,128.0 154.0,126.0 161.5,125.5 153.9,103.0 155.6,87.7 174.0,85.0 242.8,89.4 294.4,93.7 325.3,94.6 325.3,79.0 348.0,78.2 389.3,78.0 390.0,31.8 430.5,31.8 436.0,34.4 458.0,35.0 466.6,22.4 503.6,23.2 504.5,34.4 520.0,34.4 520.0,274.0 462.3,274.0 468.4,290.4 478.7,309.3 494.0,312.7 509.6,319.6 520.0,330.0 520.0,400.0 470.0,400.0 470.0,384.0 462.0,378.0 452.5,369.4 437.0,354.0 426.0,341.0 414.0,328.3 404.7,321.0 391.0,316.0 366.9,316.0 366.9,323.0 348.0,323.0 328.7,321.3 294.4,317.0 246.2,315.3 241.0,311.0 237.6,297.2 217.0,292.0 184.3,291.2 174.0,294.0 103.0,299.0 89.4,297.2 75.6,290.4 65.3,284.3 0.0,282.6"/></clipPath>
<g clip-path="url(#rc)"><polyline points="420.0,-4.0 422.8,-2.1 426.7,0.5 431.3,3.6 436.1,7.0 440.6,10.5 444.3,13.8 447.2,17.1 449.5,20.4 451.6,23.9 453.6,27.4 455.5,30.9 457.5,34.4 459.7,38.0 461.8,41.8 463.9,45.6 466.0,49.3 468.1,52.8 470.0,56.0 471.8,58.8 473.4,61.4 475.0,63.8 476.6,66.0 478.2,68.3 480.0,70.5 481.9,72.8 483.8,75.0 485.8,77.2 487.8,79.3 489.9,81.4 492.0,83.5 494.2,85.5 496.4,87.5 498.7,89.5 501.0,91.4 503.5,93.2 506.0,95.0 508.9,96.7 512.1,98.5 515.4,100.2 518.5,101.8 521.1,103.0 523.0,104.0" fill="none" stroke="#d8743c" stroke-width="12.4" stroke-linejoin="round" stroke-linecap="round" /><polyline points="420.0,-4.0 422.8,-2.1 426.7,0.5 431.3,3.6 436.1,7.0 440.6,10.5 444.3,13.8 447.2,17.1 449.5,20.4 451.6,23.9 453.6,27.4 455.5,30.9 457.5,34.4 459.7,38.0 461.8,41.8 463.9,45.6 466.0,49.3 468.1,52.8 470.0,56.0 471.8,58.8 473.4,61.4 475.0,63.8 476.6,66.0 478.2,68.3 480.0,70.5 481.9,72.8 483.8,75.0 485.8,77.2 487.8,79.3 489.9,81.4 492.0,83.5 494.2,85.5 496.4,87.5 498.7,89.5 501.0,91.4 503.5,93.2 506.0,95.0 508.9,96.7 512.1,98.5 515.4,100.2 518.5,101.8 521.1,103.0 523.0,104.0" fill="none" stroke="#f6a264" stroke-width="10.2" stroke-linejoin="round" stroke-linecap="round" /><polyline points="420.0,-4.0 422.8,-2.1 426.7,0.5 431.3,3.6 436.1,7.0 440.6,10.5 444.3,13.8 447.2,17.1 449.5,20.4 451.6,23.9 453.6,27.4 455.5,30.9 457.5,34.4 459.7,38.0 461.8,41.8 463.9,45.6 466.0,49.3 468.1,52.8 470.0,56.0 471.8,58.8 473.4,61.4 475.0,63.8 476.6,66.0 478.2,68.3 480.0,70.5 481.9,72.8 483.8,75.0 485.8,77.2 487.8,79.3 489.9,81.4 492.0,83.5 494.2,85.5 496.4,87.5 498.7,89.5 501.0,91.4 503.5,93.2 506.0,95.0 508.9,96.7 512.1,98.5 515.4,100.2 518.5,101.8 521.1,103.0 523.0,104.0" fill="none" stroke="#e08850" stroke-width="0.8" stroke-linejoin="round" stroke-linecap="round" /></g>
<g font-family="Liberation Sans, sans-serif">
<text x="283.3" y="196.5" font-size="15.7" fill="#111">Giugliano in</text>
<text x="289.7" y="211.5" font-size="15.7" fill="#111">Campania</text>
<text x="190.7" y="200.6" font-size="11" fill="#5e1030">Piazza Annunziata</text>
<text x="231.8" y="251.1" font-size="11" fill="#7a1030">Piazza Antonio</text>
<text x="248.8" y="262.3" font-size="11" fill="#7a1030">Gramsci</text>
<text x="195.5" y="328.2" font-size="13" fill="#111" stroke="#fff" stroke-width="2.5" stroke-opacity=".8" paint-order="stroke">Villaricca</text>
<text transform="translate(460.5,364) rotate(90)" font-size="11" fill="#300">6</text>
</g>
<rect x="-4" y="345.8" width="21" height="13.4" rx="1.5" fill="#fbe64a" stroke="#222" stroke-width="1"/><text x="1" y="356.8" font-family="DejaVu Sans, sans-serif" font-size="9.5" fill="#222">P1</text>
<text x="8.5" y="379.8" font-family="Liberation Sans, sans-serif" font-weight="bold" font-size="29" letter-spacing="1" fill="#303030">geo<tspan fill="#f4b81c" fill-opacity=".9">poi</tspan></text>
<text x="112" y="373" font-family="Liberation Sans, sans-serif" font-size="11" fill="#555">®</text>
<rect x="174" y="384" width="346" height="16" fill="#fff" fill-opacity=".75"/>
<text x="182.6" y="395.5" font-family="Liberation Serif, serif" font-size="14" fill="#111">© Geopoi, Map Data: © <tspan fill="#1a1a9c">Here</tspan>, <tspan fill="#1a1a9c">OpenStreetMap contributors</tspan></text>
<text x="180.9" y="369.4" font-family="Liberation Serif, serif" font-size="15.5" fill="#000">1000 m</text>
<rect x="170" y="380" width="175" height="3.4" fill="#000"/><rect x="170" y="371" width="3.4" height="22.5" fill="#000"/><rect x="341.6" y="371" width="3.4" height="22.5" fill="#000"/>
</svg>
</div>
<div class="abs" id="smallmap">
<svg width="270" height="249" viewBox="0 0 270 249" style="display:block">
<rect width="270" height="249" fill="#f1f2f8"/>
<path d="M164.4 182.1L208.9 204.7M59.7 3.4L79.0 33.9M59.0 130.8L73.3 151.1M68.3 227.3L26.6 256.6M28.9 149.9L59.8 199.9M-8.5 190.4L-3.4 217.9M259.2 129.7L288.8 180.2M45.1 240.0L18.4 256.1M36.5 27.7L87.0 38.8M154.1 144.4L147.6 174.7M75.7 170.4L93.0 213.7M6.0 242.6L32.9 258.1M103.2 132.2L67.4 152.2M-7.5 2.1L10.2 57.3M23.3 53.7L-3.6 69.1M136.9 190.9L184.1 207.8M92.8 66.6L74.2 70.8M85.4 148.2L110.1 199.1M142.6 70.9L126.0 119.1M165.5 176.8L151.5 194.1M3.6 245.6L-34.1 275.8M86.3 54.8L38.2 89.1M168.7 197.6L157.0 214.9M194.9 236.0L167.1 256.6M31.8 208.8L17.8 263.5M163.7 33.8L118.7 43.5M79.0 61.0L59.9 71.1M95.6 246.0L106.9 281.7M84.8 13.1L68.0 49.0M130.8 6.3L108.2 45.1M202.7 84.1L187.6 106.4M264.7 175.4L244.8 211.5M-6.8 131.7L-15.9 157.4M70.9 119.6L55.7 160.9M196.6 204.5L183.0 222.8M232.8 106.5L209.3 136.8M138.2 33.0L116.2 62.1M183.6 176.4L142.4 204.9M152.6 162.4L118.4 182.9M232.8 60.1L273.7 66.2M164.7 36.8L169.8 52.9M122.0 48.6L139.6 58.1M261.0 115.0L290.8 122.9M175.5 8.6L202.3 57.4M-9.8 95.0L-40.6 139.3M182.9 131.7L209.9 140.9M72.7 122.8L41.0 163.8M107.3 200.6L98.5 220.8M97.2 113.6L102.9 155.5M88.3 221.4L117.1 228.5M246.6 129.7L220.5 178.2M95.2 101.8L108.6 135.9M188.3 89.4L196.8 114.7M264.7 118.5L220.0 154.8M76.1 230.8L83.7 249.8M164.1 104.9L159.9 125.6M99.9 114.4L89.1 149.1M0.3 116.9L7.5 143.9M127.8 247.1L148.5 248.3M69.1 173.4L60.7 187.2M87.9 166.6L102.9 188.3M117.6 227.4L146.4 268.3M109.8 139.1L58.7 152.8M123.2 166.7L129.3 202.1M202.3 68.6L234.1 82.0M70.2 192.2L61.1 227.6M143.7 118.9L128.9 149.7M141.6 2.6L150.4 19.2M7.6 234.0L-22.8 284.6M269.5 171.6L289.9 173.9M162.1 203.5L181.4 211.8M71.9 227.8L83.7 247.9M214.6 7.4L225.8 23.8M96.2 8.6L115.4 15.3M101.6 151.5L129.7 159.2M158.1 116.8L145.4 133.9M72.5 137.3L48.8 169.5M163.8 58.2L187.0 101.1M134.8 24.6L141.4 59.4M98.9 24.0L116.4 30.9M177.0 13.6L210.8 24.2M99.2 109.8L90.2 147.7M141.8 89.6L146.9 123.6M212.4 184.1L251.1 207.1M219.8 26.2L197.5 38.8M83.3 149.0L65.8 175.8M192.4 82.8L173.4 111.6M228.4 124.0L236.6 155.8M17.2 -1.4L35.7 30.7M252.4 161.3L245.9 196.8M239.1 150.4L208.3 168.5M43.6 159.2L75.1 166.8M236.5 29.4L224.5 79.8M200.1 164.0L215.9 168.8M248.9 85.6L290.7 103.0M122.1 234.9L148.8 247.5M117.1 52.1L143.9 91.0M150.9 160.0L105.4 171.0M180.5 37.8L165.4 83.3M191.0 32.3L203.4 53.3M2.3 147.6L-0.9 165.1M208.2 96.2L260.7 99.7M224.4 136.4L248.0 146.6M214.9 13.8L194.5 29.8M4.1 92.9L56.5 96.8M114.8 155.9L135.4 167.8M184.8 155.9L191.3 173.5M77.9 18.0L94.8 68.8M50.0 -5.5L33.3 31.6M95.5 151.9L120.7 165.9M115.7 204.0L122.9 224.0M125.3 192.0L109.1 216.2M26.3 11.2L40.0 60.3M261.0 162.6L251.3 208.1M3.4 41.8L-28.4 86.4M10.1 189.3L-27.9 201.7M240.9 159.4L252.3 192.4M218.7 159.8L261.3 178.5M65.0 200.3L37.9 212.1M75.8 25.6L49.7 35.2M7.8 187.8L25.0 188.9M26.4 82.5L0.6 116.3M54.7 101.1L46.1 131.0M35.7 150.4L40.6 169.0M138.5 34.3L160.7 87.1M212.5 20.6L202.6 43.9M156.9 34.4L208.8 58.4M139.1 241.1L190.5 246.4M107.4 3.5L148.3 6.3M125.0 218.4L103.4 229.1M220.1 68.5L193.3 111.1M92.7 199.5L123.6 211.1M30.1 205.4L13.2 214.6M101.2 185.2L87.0 204.6M213.2 73.9L171.6 85.0M214.1 87.5L256.1 91.8M163.9 200.6L179.7 204.0M77.4 89.2L35.3 107.9M115.9 194.0L164.3 209.9M91.6 143.7L100.1 160.2M14.4 82.2L-34.3 111.3M66.9 175.5L85.8 176.8M259.3 67.9L233.0 113.5M196.8 148.2L203.9 166.0M23.9 78.6L10.6 85.8M99.2 36.1L106.3 78.2M98.3 18.2L92.4 36.8M72.3 196.5L92.1 207.3M167.2 188.5L178.9 227.4M165.4 155.7L135.2 171.6M138.1 224.3L130.9 241.7M239.0 75.7L223.3 88.3M147.5 146.3L159.2 173.6M18.6 193.8L9.5 209.0M125.7 206.2L177.8 217.2M170.7 230.0L178.0 272.1M213.4 207.5L235.2 210.8M16.0 29.4L48.9 40.9M80.4 189.3L95.2 243.9M257.9 151.9L308.2 163.8M44.7 74.0L62.1 116.1M198.0 11.7L162.9 19.6M-8.4 243.9L-12.1 258.6M96.7 78.7L151.4 95.4M189.5 -5.9L141.6 3.4M44.7 79.0L61.9 112.3M185.1 194.4L214.7 200.3M227.4 124.5L286.1 134.0M65.9 176.5L74.9 193.6M123.7 245.0L98.6 251.8" stroke="#d9dce6" stroke-width="1.1" fill="none"/>
<polygon points="215,125 270,125 270,249 170,249 150,215 138,186 100,184 40,184 40,150 140,150 160,155 182,167 206,172 215,165" fill="#eadfc2"/>
<polygon points="245,29 260,27 260,14 270,11 270,72 234,72 234,67 245,64" fill="#eadfc2"/>
<polygon points="240.6,75.4 270,75.4 270,125 215,125 218,110 240,100" fill="#eadfc2"/>
<polygon points="28,10 38,10 38,22 30,22" fill="#eadfc2"/>
<clipPath id="tc"><polygon points="215,125 270,125 270,249 170,249 150,215 138,186 100,184 40,184 40,150 140,150 160,155 182,167 206,172 215,165"/><polygon points="245,29 260,27 260,14 270,11 270,125 215,125 218,110 240,100 240.6,75.4 234,72 234,67 245,64"/></clipPath>
<g clip-path="url(#tc)"><path d="M40 150L40 249M45 150L45 249M50 150L50 249M55 150L55 249M60 150L60 249M65 150L65 249M70 150L70 249M75 150L75 249M80 150L80 249M85 150L85 249M90 150L90 249M95 150L95 249M100 150L100 249M105 150L105 249M110 150L110 249M115 150L115 249M120 150L120 249M125 150L125 249M130 150L130 249M135 150L135 249M140 150L140 249M145 150L145 249M150 150L150 249M155 150L155 249M160 150L160 249M165 150L165 249M170 150L170 249M175 150L175 249M180 150L180 249M185 150L185 249M190 150L190 249M195 150L195 249M200 150L200 249M205 150L205 249M210 150L210 249M215 150L215 249M220 150L220 249M225 150L225 249M230 150L230 249M235 150L235 249M240 150L240 249M245 150L245 249M250 150L250 249M255 150L255 249M260 150L260 249M265 150L265 249M270 150L270 249M40 128L270 128M40 133L270 133M40 138L270 138M40 143L270 143M40 148L270 148M40 153L270 153M40 158L270 158M40 163L270 163M40 168L270 168M40 173L270 173M40 178L270 178M40 183L270 183M40 188L270 188M40 193L270 193M40 198L270 198M40 203L270 203M40 208L270 208M40 213L270 213M40 218L270 218M40 223L270 223M40 228L270 228M40 233L270 233M40 238L270 238M40 243L270 243M40 248L270 248M212 10L212 128M217 10L217 128M222 10L222 128M227 10L227 128M232 10L232 128M237 10L237 128M242 10L242 128M247 10L247 128M252 10L252 128M257 10L257 128M262 10L262 128M267 10L267 128M212 12L270 12M212 17L270 17M212 22L270 22M212 27L270 27M212 32L270 32M212 37L270 37M212 42L270 42M212 47L270 47M212 52L270 52M212 57L270 57M212 62L270 62M212 67L270 67M212 72L270 72M212 77L270 77M212 82L270 82M212 87L270 87M212 92L270 92M212 97L270 97M212 102L270 102M212 107L270 107M212 112L270 112M212 117L270 117M212 122L270 122M212 127L270 127" stroke="#f6f3ea" stroke-width="1" fill="none" stroke-opacity=".8"/></g>
<rect x="71" y="201" width="16" height="14" fill="#eadf9a"/>
<polygon points="208.5,29 222,29 224.6,51.4 212,50" fill="#c2ddb4"/><rect x="216.5" y="62.6" width="8" height="13" fill="#c2ddb4"/>
<rect x="232.6" y="211.7" width="14.4" height="16" fill="#b4d6a0"/>
<polyline points="0.0,10.0 40.0,12.0 60.0,2.0" fill="none" stroke="#c4c6cc" stroke-width="2" stroke-linejoin="round" stroke-linecap="round" />
<polyline points="178.0,32.0 205.0,24.0 240.0,14.0 270.0,4.0" fill="none" stroke="#c4c6cc" stroke-width="2" stroke-linejoin="round" stroke-linecap="round" />
<polyline points="195.0,22.0 215.0,40.0 234.0,67.0 255.0,78.0 270.0,80.0" fill="none" stroke="#c4c6cc" stroke-width="2" stroke-linejoin="round" stroke-linecap="round" />
<polyline points="0.0,160.0 40.0,175.0 80.0,190.0 120.0,215.0 150.0,249.0" fill="none" stroke="#c4c6cc" stroke-width="2" stroke-linejoin="round" stroke-linecap="round" />
<polyline points="0.0,190.0 30.0,205.0 60.0,230.0 75.0,249.0" fill="none" stroke="#c4c6cc" stroke-width="2" stroke-linejoin="round" stroke-linecap="round" />
<polyline points="40.0,184.0 42.0,249.0" fill="none" stroke="#c4c6cc" stroke-width="2" stroke-linejoin="round" stroke-linecap="round" />
<polyline points="100.0,184.0 104.0,249.0" fill="none" stroke="#c4c6cc" stroke-width="2" stroke-linejoin="round" stroke-linecap="round" />
<polyline points="225.0,100.0 240.0,86.0 255.0,78.0" fill="none" stroke="#c4c6cc" stroke-width="2" stroke-linejoin="round" stroke-linecap="round" />
<polyline points="0.0,224.0 60.0,226.0" fill="none" stroke="#c4c6cc" stroke-width="2" stroke-linejoin="round" stroke-linecap="round" />
<polyline points="253.0,0.0 256.0,30.0 262.0,60.0" fill="none" stroke="#c4c6cc" stroke-width="2" stroke-linejoin="round" stroke-linecap="round" />
<polyline points="200.0,52.0 225.0,51.0 245.0,46.0" fill="none" stroke="#c4c6cc" stroke-width="2" stroke-linejoin="round" stroke-linecap="round" />
<polygon points="22.0,51.8 73.1,44.0 92.2,45.7 93.9,51.8 113.9,52.6 114.7,63.0 130.0,63.0 148.2,68.2 147.3,54.4 166.4,52.6 165.5,21.4 182.0,20.6 187.2,33.6 202.7,66.5 211.4,83.8 169.8,83.0 167.2,96.0 152.5,96.0 130.0,94.2 111.3,94.2 107.8,106.3 80.0,111.5 57.6,116.7 54.0,127.0 54.0,135.9 64.5,137.6 64.5,148.0 42.0,149.7 21.2,142.8 0.0,132.4 0.0,127.0 16.0,123.6 19.4,94.2 29.8,90.7 36.8,76.9 20.3,71.7" fill="#f8f36e"/>
<polygon points="42.0,7.6 140.4,8.5 143.0,11.0 150.8,14.5 151.7,20.6 165.5,21.4 166.4,52.6 147.3,54.4 148.2,68.2 130.0,63.0 114.7,63.0 113.9,52.6 93.9,51.8 92.2,45.7 73.1,44.0 24.6,51.8 27.2,45.7 42.0,28.4 47.2,18.0" fill="#7d7df2"/>
<polygon points="-0.5,20.6 12.5,20.6 20.3,3.3 22.0,18.0 22.0,49.2 20.3,71.7 36.8,76.9 29.8,90.7 19.4,94.2 16.0,123.6 0.0,127.0" fill="#7d7df2"/>
<polygon points="169.8,83.0 211.4,83.8 218.3,102.9 214.9,122.0 213.0,134.0 206.0,135.0 206.0,144.5 187.0,144.5 190.6,155.0 199.3,161.8 209.7,168.8 206.0,172.0 182.0,167.0 168.0,156.6 157.7,155.0 157.7,151.4 130.0,149.7 94.0,148.8 90.5,146.2 66.2,144.5 64.5,137.6 54.0,135.9 52.4,122.0 54.0,127.0 57.6,116.7 80.0,111.5 107.8,106.3 111.3,94.2 130.0,94.2 152.5,96.0 167.2,96.0" fill="#ef6f66"/>
<polyline points="177.0,-1.0 198.0,49.2 219.0,102.9 226.2,125.0 234.2,141.0 247.0,162.0 260.0,178.0 271.0,187.0" fill="none" stroke="#d2c48c" stroke-width="5" stroke-linejoin="round" stroke-linecap="round" />
<polyline points="177.0,-1.0 198.0,49.2 219.0,102.9 226.2,125.0 234.2,141.0 247.0,162.0 260.0,178.0 271.0,187.0" fill="none" stroke="#faf0a8" stroke-width="3.6" stroke-linejoin="round" stroke-linecap="round" />
<polyline points="-1.0,130.7 40.2,151.4 69.7,160.0 102.6,175.7 140.0,179.2 157.7,179.0 189.3,186.0" fill="none" stroke="#d8c98a" stroke-width="4" stroke-linejoin="round" stroke-linecap="round" />
<polyline points="-1.0,130.7 40.2,151.4 69.7,160.0 102.6,175.7 140.0,179.2 157.7,179.0 189.3,186.0" fill="none" stroke="#f9e98a" stroke-width="3" stroke-linejoin="round" stroke-linecap="round" />
<polyline points="189.3,186.0 202.0,189.0 223.0,200.4 234.2,203.7 247.0,197.2 260.0,192.4 270.0,181.0" fill="none" stroke="#d8c98a" stroke-width="6" stroke-linejoin="round" stroke-linecap="round" />
<polyline points="189.3,186.0 202.0,189.0 223.0,200.4 234.2,203.7 247.0,197.2 260.0,192.4 270.0,181.0" fill="none" stroke="#f8ea9c" stroke-width="4.8" stroke-linejoin="round" stroke-linecap="round" />
<polyline points="240.6,202.0 260.0,208.5 270.0,195.6" fill="none" stroke="#d8c98a" stroke-width="6" stroke-linejoin="round" stroke-linecap="round" />
<polyline points="240.6,202.0 260.0,208.5 270.0,195.6" fill="none" stroke="#f8ea9c" stroke-width="4.8" stroke-linejoin="round" stroke-linecap="round" />
<polyline points="95.0,10.0 105.0,25.0 108.0,45.0 112.0,60.0 140.0,68.0" fill="none" stroke="#6a6ad0" stroke-width="1.4" stroke-linejoin="round" stroke-linecap="round" />
<polyline points="0.0,75.0 22.0,62.0 60.0,58.0 95.0,70.0 130.0,80.0 170.0,83.0" fill="none" stroke="#f5ea5e" stroke-width="2.4" stroke-linejoin="round" stroke-linecap="round" />
<rect x="62.4" y="-3" width="29" height="12.3" rx="1.5" fill="#fbe64a" stroke="#222" stroke-width="1"/><text x="76.9" y="6.550000000000001" text-anchor="middle" font-family="DejaVu Sans, sans-serif" font-size="9.5" fill="#222">SP335</text>
<rect x="81.5" y="32.7" width="29" height="13" rx="1.5" fill="#8080e8" stroke="#222" stroke-width="1"/><text x="96.0" y="42.6" text-anchor="middle" font-family="DejaVu Sans, sans-serif" font-size="9.5" fill="#222">SS265</text>
<rect x="40.2" y="149.7" width="29.5" height="13.9" rx="1.5" fill="#fbe64a" stroke="#222" stroke-width="1"/><text x="54.95" y="160.04999999999998" text-anchor="middle" font-family="DejaVu Sans, sans-serif" font-size="9.5" fill="#222">SP1</text>
<rect x="103.1" y="169.6" width="29.8" height="13.9" rx="1.5" fill="#fbe64a" stroke="#222" stroke-width="1"/><text x="118.0" y="179.95" text-anchor="middle" font-family="DejaVu Sans, sans-serif" font-size="9.5" fill="#222">SP1</text>
<rect x="157.7" y="172.6" width="28.6" height="13.4" rx="1.5" fill="#fbe64a" stroke="#222" stroke-width="1"/><text x="172.0" y="182.7" text-anchor="middle" font-family="DejaVu Sans, sans-serif" font-size="9.5" fill="#222">SP1</text>
<g font-family="Liberation Sans, sans-serif">
<text x="110.7" y="124.7" font-size="15.7" fill="#8c1414">Giugliano in</text>
<text x="117.5" y="140" font-size="15.7" fill="#8c1414">Campania</text>
<text x="226.5" y="63.8" font-size="16" fill="#111">Sant'Antimo</text>
<text x="184.5" y="159.2" font-size="16" fill="#111">Melito di Napoli</text>
<text x="136.3" y="202.5" font-size="16" fill="#222">Mugnano di</text>
<text x="156.5" y="217.5" font-size="16" fill="#222">Napoli</text>
<text x="100.9" y="160.8" font-size="13" fill="#222">Villaricca</text>
<text x="-7" y="210" font-size="12" fill="#222">San Pietro</text>
<text x="68" y="228.4" font-size="13" fill="#222">Calvizzano</text>
<text transform="translate(43,22.5) rotate(53)" font-size="10.7" fill="#1c2060">Via Arco Sant'Antonio</text>
<path id="asse" d="M181,81 Q191,98 203,101 T242,99" fill="none"/>
<text font-size="11" fill="#8c1414"><textPath href="#asse">Asse Mediano</textPath></text>
<text x="263" y="142" font-size="13" fill="#222">C</text>
</g>
<rect x="176" y="206" width="52" height="15" fill="#fff" fill-opacity=".6"/>
<text x="179.8" y="219.8" font-family="Liberation Serif, serif" font-size="16" fill="#000">2000 m</text>
<text x="8.5" y="251" font-family="Liberation Sans, sans-serif" font-weight="bold" font-size="29" letter-spacing="1" fill="#303030">geo<tspan fill="#f4d878" fill-opacity=".5">po</tspan></text>
<rect x="2" y="236.5" width="268" height="12.5" fill="#fff" fill-opacity=".88"/>
<text x="4.7" y="245.6" font-family="Liberation Serif, serif" font-size="10.8" fill="#111">© Geopoi, Map Data: © <tspan fill="#1a1a9c">Here</tspan>, <tspan fill="#1a1a9c">OpenStreetMap contributors</tspan></text>
<rect x="170.7" y="230.3" width="91.3" height="3.8" fill="#000"/><rect x="170.7" y="221.6" width="3.5" height="21.7" fill="#000"/><rect x="258.7" y="221.6" width="3.5" height="21.7" fill="#000"/>
</svg>
</div>
</body>
</html>
